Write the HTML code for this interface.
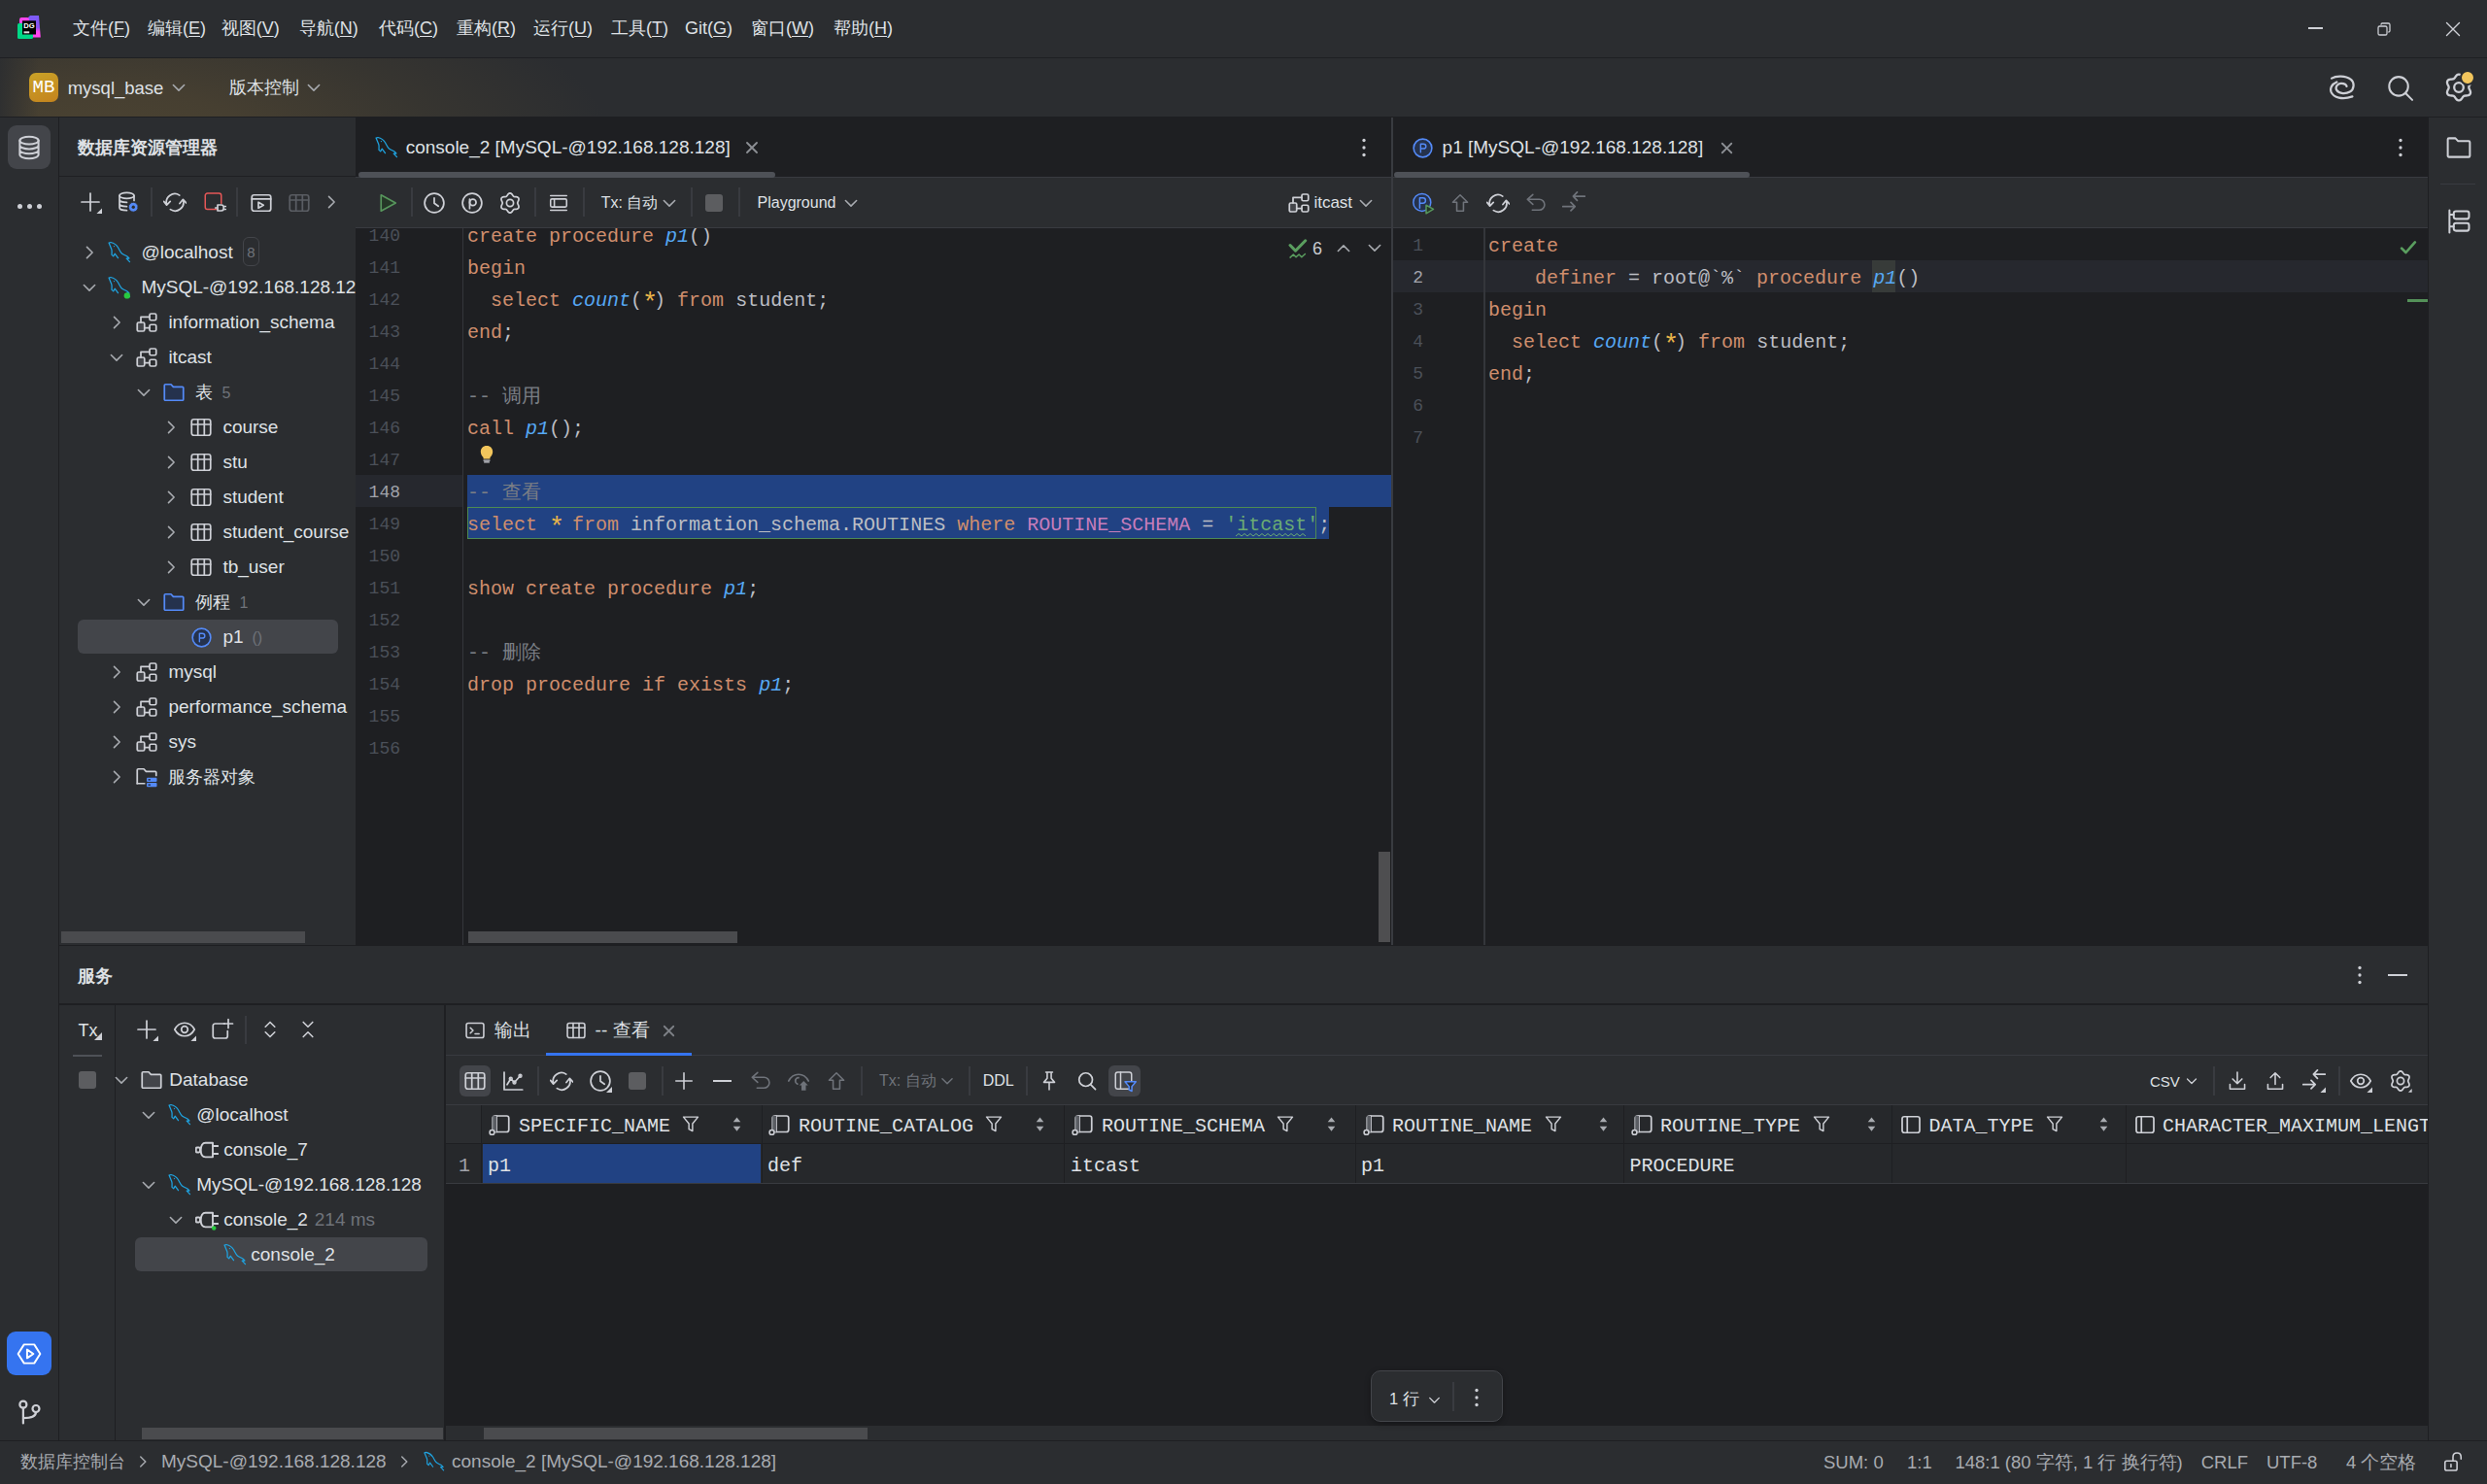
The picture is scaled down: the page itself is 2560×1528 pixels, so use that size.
<!DOCTYPE html><html><head><meta charset="utf-8"><style>
html,body{margin:0;padding:0;width:2560px;height:1528px;overflow:hidden;background:#2B2D30;position:relative;}
div,svg{box-sizing:border-box;}
</style></head><body>
<div style="position:absolute;left:0px;top:0px;width:2560px;height:59px;background:#2B2D30;"></div>
<div style="position:absolute;left:0px;top:59px;width:2560px;height:1px;background:#1E1F22;"></div>
<div style="position:absolute;left:0px;top:60px;width:2560px;height:60px;background:#2B2D30;background:radial-gradient(ellipse 520px 190px at 110px 90px, #4C4432 0%, #463F31 30%, #373530 65%, #2B2D30 100%);"></div>
<div style="position:absolute;left:0px;top:60px;width:40px;height:60px;background:linear-gradient(90deg,rgba(43,45,48,0.85) 0%,rgba(43,45,48,0) 100%);"></div>
<div style="position:absolute;left:0px;top:120px;width:2560px;height:1px;background:#1E1F22;"></div>
<div style="position:absolute;left:60px;top:121px;width:1px;height:1362px;background:#1E1F22;"></div>
<div style="position:absolute;left:2499px;top:121px;width:1px;height:1362px;background:#1E1F22;"></div>
<div style="position:absolute;left:61px;top:181px;width:305px;height:1px;background:#1E1F22;"></div>
<div style="position:absolute;left:366px;top:121px;width:1066px;height:61px;background:#1E1F22;"></div>
<div style="position:absolute;left:366px;top:182px;width:1066px;height:1px;background:#393B40;"></div>
<div style="position:absolute;left:366px;top:183px;width:1066px;height:51px;background:#2B2D30;"></div>
<div style="position:absolute;left:366px;top:234px;width:1066px;height:1px;background:#393B40;"></div>
<div style="position:absolute;left:366px;top:235px;width:1066px;height:738px;background:#1E1F22;"></div>
<div style="position:absolute;left:1432px;top:121px;width:2px;height:852px;background:#393B40;"></div>
<div style="position:absolute;left:1434px;top:121px;width:1065px;height:61px;background:#1E1F22;"></div>
<div style="position:absolute;left:1434px;top:182px;width:1065px;height:1px;background:#393B40;"></div>
<div style="position:absolute;left:1434px;top:183px;width:1065px;height:51px;background:#2B2D30;"></div>
<div style="position:absolute;left:1434px;top:234px;width:1065px;height:1px;background:#393B40;"></div>
<div style="position:absolute;left:1434px;top:235px;width:1065px;height:738px;background:#1E1F22;"></div>
<div style="position:absolute;left:61px;top:973px;width:2438px;height:1px;background:#1E1F22;"></div>
<div style="position:absolute;left:61px;top:1033px;width:2438px;height:2px;background:#1E1F22;"></div>
<div style="position:absolute;left:118px;top:1035px;width:1px;height:448px;background:#1E1F22;"></div>
<div style="position:absolute;left:457px;top:1035px;width:2px;height:448px;background:#1E1F22;"></div>
<div style="position:absolute;left:459px;top:1086px;width:2040px;height:1px;background:#393B40;"></div>
<div style="position:absolute;left:459px;top:1137px;width:2040px;height:1px;background:#393B40;"></div>
<div style="position:absolute;left:459px;top:1138px;width:2040px;height:39px;background:#26282B;"></div>
<div style="position:absolute;left:459px;top:1138px;width:36px;height:39px;background:#2B2D30;"></div>
<div style="position:absolute;left:459px;top:1177px;width:2040px;height:1px;background:#1E1F22;"></div>
<div style="position:absolute;left:459px;top:1178px;width:2040px;height:40px;background:#26282B;"></div>
<div style="position:absolute;left:459px;top:1218px;width:2040px;height:1px;background:#393B40;"></div>
<div style="position:absolute;left:459px;top:1219px;width:2040px;height:249px;background:#1E1F22;"></div>
<div style="position:absolute;left:459px;top:1468px;width:2040px;height:15px;background:#2B2D30;"></div>
<div style="position:absolute;left:0px;top:1483px;width:2560px;height:1px;background:#1E1F22;"></div>
<div style="position:absolute;left:75px;top:17.0px;height:25px;line-height:25px;font-family:'Liberation Sans',sans-serif;font-size:18px;color:#DFE1E5;white-space:pre;text-decoration-thickness:1px;text-underline-offset:2px;">文件(<u>F</u>)</div>
<div style="position:absolute;left:152px;top:17.0px;height:25px;line-height:25px;font-family:'Liberation Sans',sans-serif;font-size:18px;color:#DFE1E5;white-space:pre;text-decoration-thickness:1px;text-underline-offset:2px;">编辑(<u>E</u>)</div>
<div style="position:absolute;left:227.7px;top:17.0px;height:25px;line-height:25px;font-family:'Liberation Sans',sans-serif;font-size:18px;color:#DFE1E5;white-space:pre;text-decoration-thickness:1px;text-underline-offset:2px;">视图(<u>V</u>)</div>
<div style="position:absolute;left:307.7px;top:17.0px;height:25px;line-height:25px;font-family:'Liberation Sans',sans-serif;font-size:18px;color:#DFE1E5;white-space:pre;text-decoration-thickness:1px;text-underline-offset:2px;">导航(<u>N</u>)</div>
<div style="position:absolute;left:390px;top:17.0px;height:25px;line-height:25px;font-family:'Liberation Sans',sans-serif;font-size:18px;color:#DFE1E5;white-space:pre;text-decoration-thickness:1px;text-underline-offset:2px;">代码(<u>C</u>)</div>
<div style="position:absolute;left:469.9px;top:17.0px;height:25px;line-height:25px;font-family:'Liberation Sans',sans-serif;font-size:18px;color:#DFE1E5;white-space:pre;text-decoration-thickness:1px;text-underline-offset:2px;">重构(<u>R</u>)</div>
<div style="position:absolute;left:549.1px;top:17.0px;height:25px;line-height:25px;font-family:'Liberation Sans',sans-serif;font-size:18px;color:#DFE1E5;white-space:pre;text-decoration-thickness:1px;text-underline-offset:2px;">运行(<u>U</u>)</div>
<div style="position:absolute;left:629.1px;top:17.0px;height:25px;line-height:25px;font-family:'Liberation Sans',sans-serif;font-size:18px;color:#DFE1E5;white-space:pre;text-decoration-thickness:1px;text-underline-offset:2px;">工具(<u>T</u>)</div>
<div style="position:absolute;left:705.1px;top:17.0px;height:25px;line-height:25px;font-family:'Liberation Sans',sans-serif;font-size:18px;color:#DFE1E5;white-space:pre;text-decoration-thickness:1px;text-underline-offset:2px;">Git(<u>G</u>)</div>
<div style="position:absolute;left:773px;top:17.0px;height:25px;line-height:25px;font-family:'Liberation Sans',sans-serif;font-size:18px;color:#DFE1E5;white-space:pre;text-decoration-thickness:1px;text-underline-offset:2px;">窗口(<u>W</u>)</div>
<div style="position:absolute;left:858px;top:17.0px;height:25px;line-height:25px;font-family:'Liberation Sans',sans-serif;font-size:18px;color:#DFE1E5;white-space:pre;text-decoration-thickness:1px;text-underline-offset:2px;">帮助(<u>H</u>)</div>
<div style="position:absolute;left:30px;top:75px;width:30px;height:30px;background:linear-gradient(160deg,#C9A227,#C4831E);border-radius:7px;"></div>
<div style="position:absolute;left:30px;top:77.0px;height:26px;line-height:26px;font-family:'Liberation Mono',monospace;font-size:19px;color:#FFFFFF;white-space:pre;width:30px;text-align:center;">MB</div>
<div style="position:absolute;left:69.7px;top:77.5px;height:25px;line-height:25px;font-family:'Liberation Sans',sans-serif;font-size:18.5px;color:#DFE1E5;white-space:pre;">mysql_base</div>
<div style="position:absolute;left:236px;top:77.5px;height:25px;line-height:25px;font-family:'Liberation Sans',sans-serif;font-size:18px;color:#DFE1E5;white-space:pre;">版本控制</div>
<div style="position:absolute;left:80px;top:140.0px;height:25px;line-height:25px;font-family:'Liberation Sans',sans-serif;font-size:18px;color:#DFE1E5;white-space:pre;font-weight:bold;">数据库资源管理器</div>
<div style="position:absolute;left:80px;top:638px;width:268px;height:35px;background:#43454A;border-radius:6px;"></div>
<div style="position:absolute;left:145.4px;top:247.0px;height:26px;line-height:26px;font-family:'Liberation Sans',sans-serif;font-size:19px;color:#DFE1E5;white-space:pre;">@localhost</div>
<div style="position:absolute;left:145.4px;top:283.0px;height:26px;line-height:26px;font-family:'Liberation Sans',sans-serif;font-size:19px;color:#DFE1E5;white-space:pre;">MySQL-@192.168.128.12</div>
<div style="position:absolute;left:173.4px;top:319.0px;height:26px;line-height:26px;font-family:'Liberation Sans',sans-serif;font-size:19px;color:#DFE1E5;white-space:pre;">information_schema</div>
<div style="position:absolute;left:173.4px;top:355.0px;height:26px;line-height:26px;font-family:'Liberation Sans',sans-serif;font-size:19px;color:#DFE1E5;white-space:pre;">itcast</div>
<div style="position:absolute;left:201.4px;top:391.5px;height:25px;line-height:25px;font-family:'Liberation Sans',sans-serif;font-size:18px;color:#DFE1E5;white-space:pre;">表</div>
<div style="position:absolute;left:228.4px;top:394.0px;height:22px;line-height:22px;font-family:'Liberation Sans',sans-serif;font-size:16px;color:#6F737A;white-space:pre;">5</div>
<div style="position:absolute;left:229.4px;top:427.0px;height:26px;line-height:26px;font-family:'Liberation Sans',sans-serif;font-size:19px;color:#DFE1E5;white-space:pre;">course</div>
<div style="position:absolute;left:229.4px;top:463.0px;height:26px;line-height:26px;font-family:'Liberation Sans',sans-serif;font-size:19px;color:#DFE1E5;white-space:pre;">stu</div>
<div style="position:absolute;left:229.4px;top:499.0px;height:26px;line-height:26px;font-family:'Liberation Sans',sans-serif;font-size:19px;color:#DFE1E5;white-space:pre;">student</div>
<div style="position:absolute;left:229.4px;top:535.0px;height:26px;line-height:26px;font-family:'Liberation Sans',sans-serif;font-size:19px;color:#DFE1E5;white-space:pre;">student_course</div>
<div style="position:absolute;left:229.4px;top:571.0px;height:26px;line-height:26px;font-family:'Liberation Sans',sans-serif;font-size:19px;color:#DFE1E5;white-space:pre;">tb_user</div>
<div style="position:absolute;left:201.4px;top:607.5px;height:25px;line-height:25px;font-family:'Liberation Sans',sans-serif;font-size:18px;color:#DFE1E5;white-space:pre;">例程</div>
<div style="position:absolute;left:246.4px;top:610.0px;height:22px;line-height:22px;font-family:'Liberation Sans',sans-serif;font-size:16px;color:#6F737A;white-space:pre;">1</div>
<div style="position:absolute;left:229.4px;top:643.0px;height:26px;line-height:26px;font-family:'Liberation Sans',sans-serif;font-size:19px;color:#DFE1E5;white-space:pre;">p1</div>
<div style="position:absolute;left:259.525px;top:646.0px;height:22px;line-height:22px;font-family:'Liberation Sans',sans-serif;font-size:16px;color:#6F737A;white-space:pre;">()</div>
<div style="position:absolute;left:173.4px;top:679.0px;height:26px;line-height:26px;font-family:'Liberation Sans',sans-serif;font-size:19px;color:#DFE1E5;white-space:pre;">mysql</div>
<div style="position:absolute;left:173.4px;top:715.0px;height:26px;line-height:26px;font-family:'Liberation Sans',sans-serif;font-size:19px;color:#DFE1E5;white-space:pre;">performance_schema</div>
<div style="position:absolute;left:173.4px;top:751.0px;height:26px;line-height:26px;font-family:'Liberation Sans',sans-serif;font-size:19px;color:#DFE1E5;white-space:pre;">sys</div>
<div style="position:absolute;left:173.4px;top:787.5px;height:25px;line-height:25px;font-family:'Liberation Sans',sans-serif;font-size:18px;color:#DFE1E5;white-space:pre;">服务器对象</div>
<div style="position:absolute;left:250px;top:244px;width:17px;height:30px;background:transparent;border:1.5px solid #43454A;border-radius:6px;"></div>
<div style="position:absolute;left:251px;top:249.0px;height:21px;line-height:21px;font-family:'Liberation Sans',sans-serif;font-size:15px;color:#6F737A;white-space:pre;width:15px;text-align:center;">8</div>
<div style="position:absolute;left:417.7px;top:139.0px;height:26px;line-height:26px;font-family:'Liberation Sans',sans-serif;font-size:19px;color:#DFE1E5;white-space:pre;">console_2 [MySQL-@192.168.128.128]</div>
<div style="position:absolute;left:369px;top:177px;width:429px;height:6px;background:#4E5157;border-radius:3px;"></div>
<div style="position:absolute;left:1484.6px;top:139.0px;height:26px;line-height:26px;font-family:'Liberation Sans',sans-serif;font-size:19px;color:#DFE1E5;white-space:pre;">p1 [MySQL-@192.168.128.128]</div>
<div style="position:absolute;left:1435px;top:177px;width:366px;height:6px;background:#4E5157;border-radius:3px;"></div>
<div style="position:absolute;left:618.7px;top:197.5px;height:22px;line-height:22px;font-family:'Liberation Sans',sans-serif;font-size:16px;color:#DFE1E5;white-space:pre;">Tx: 自动</div>
<div style="position:absolute;left:779.5px;top:197.5px;height:22px;line-height:22px;font-family:'Liberation Sans',sans-serif;font-size:16px;color:#DFE1E5;white-space:pre;">Playground</div>
<div style="position:absolute;left:1352.4px;top:197.0px;height:23px;line-height:23px;font-family:'Liberation Sans',sans-serif;font-size:17px;color:#DFE1E5;white-space:pre;">itcast</div>
<div style="position:absolute;left:423px;top:193px;width:2px;height:30px;background:#393B40;"></div>
<div style="position:absolute;left:550px;top:193px;width:2px;height:30px;background:#393B40;"></div>
<div style="position:absolute;left:600px;top:193px;width:2px;height:30px;background:#393B40;"></div>
<div style="position:absolute;left:711px;top:193px;width:2px;height:30px;background:#393B40;"></div>
<div style="position:absolute;left:760px;top:193px;width:2px;height:30px;background:#393B40;"></div>
<div style="position:absolute;left:726px;top:200px;width:18px;height:18px;background:#5C5D60;border-radius:3px;"></div>
<div style="position:absolute;left:366px;top:235px;width:1066px;height:738px;overflow:hidden;">
<div style="position:absolute;left:0px;top:254px;width:110px;height:33px;background:#26282E;"></div>
<div style="position:absolute;left:115px;top:254px;width:951px;height:33px;background:#214283;"></div>
<div style="position:absolute;left:115px;top:287px;width:887px;height:33px;background:#214283;"></div>
<div style="position:absolute;left:115px;top:287px;width:874px;height:33px;background:transparent;border:1px solid #4E8A53;"></div>
<div style="position:absolute;left:0;top:-8px;width:46px;height:33px;line-height:33px;font-family:'Liberation Mono',monospace;font-size:18px;color:#4B5059;text-align:right;">140</div>
<div style="position:absolute;left:115px;top:-8px;height:33px;line-height:33px;font-family:'Liberation Mono',monospace;font-size:20px;color:#BCBEC4;white-space:pre;"><span style="color:#CF8E6D">create</span> <span style="color:#CF8E6D">procedure</span> <span style="color:#56A8F5;font-style:italic">p1</span><span style="color:#BCBEC4">()</span></div>
<div style="position:absolute;left:0;top:25px;width:46px;height:33px;line-height:33px;font-family:'Liberation Mono',monospace;font-size:18px;color:#4B5059;text-align:right;">141</div>
<div style="position:absolute;left:115px;top:25px;height:33px;line-height:33px;font-family:'Liberation Mono',monospace;font-size:20px;color:#BCBEC4;white-space:pre;"><span style="color:#CF8E6D">begin</span></div>
<div style="position:absolute;left:0;top:58px;width:46px;height:33px;line-height:33px;font-family:'Liberation Mono',monospace;font-size:18px;color:#4B5059;text-align:right;">142</div>
<div style="position:absolute;left:115px;top:58px;height:33px;line-height:33px;font-family:'Liberation Mono',monospace;font-size:20px;color:#BCBEC4;white-space:pre;">  <span style="color:#CF8E6D">select</span> <span style="color:#56A8F5;font-style:italic">count</span><span style="color:#BCBEC4">(</span><span style="color:#E8B44A;display:inline-block;width:12px;text-align:center;font-size:27px;line-height:20px;vertical-align:-5px;">*</span><span style="color:#BCBEC4">)</span> <span style="color:#CF8E6D">from</span> <span style="color:#BCBEC4">student;</span></div>
<div style="position:absolute;left:0;top:91px;width:46px;height:33px;line-height:33px;font-family:'Liberation Mono',monospace;font-size:18px;color:#4B5059;text-align:right;">143</div>
<div style="position:absolute;left:115px;top:91px;height:33px;line-height:33px;font-family:'Liberation Mono',monospace;font-size:20px;color:#BCBEC4;white-space:pre;"><span style="color:#CF8E6D">end</span><span style="color:#BCBEC4">;</span></div>
<div style="position:absolute;left:0;top:124px;width:46px;height:33px;line-height:33px;font-family:'Liberation Mono',monospace;font-size:18px;color:#4B5059;text-align:right;">144</div>
<div style="position:absolute;left:115px;top:124px;height:33px;line-height:33px;font-family:'Liberation Mono',monospace;font-size:20px;color:#BCBEC4;white-space:pre;"></div>
<div style="position:absolute;left:0;top:157px;width:46px;height:33px;line-height:33px;font-family:'Liberation Mono',monospace;font-size:18px;color:#4B5059;text-align:right;">145</div>
<div style="position:absolute;left:115px;top:157px;height:33px;line-height:33px;font-family:'Liberation Mono',monospace;font-size:20px;color:#BCBEC4;white-space:pre;"><span style="color:#7A7E85">-- 调用</span></div>
<div style="position:absolute;left:0;top:190px;width:46px;height:33px;line-height:33px;font-family:'Liberation Mono',monospace;font-size:18px;color:#4B5059;text-align:right;">146</div>
<div style="position:absolute;left:115px;top:190px;height:33px;line-height:33px;font-family:'Liberation Mono',monospace;font-size:20px;color:#BCBEC4;white-space:pre;"><span style="color:#CF8E6D">call</span> <span style="color:#56A8F5;font-style:italic">p1</span><span style="color:#BCBEC4">();</span></div>
<div style="position:absolute;left:0;top:223px;width:46px;height:33px;line-height:33px;font-family:'Liberation Mono',monospace;font-size:18px;color:#4B5059;text-align:right;">147</div>
<div style="position:absolute;left:115px;top:223px;height:33px;line-height:33px;font-family:'Liberation Mono',monospace;font-size:20px;color:#BCBEC4;white-space:pre;"></div>
<div style="position:absolute;left:0;top:256px;width:46px;height:33px;line-height:33px;font-family:'Liberation Mono',monospace;font-size:18px;color:#A1A3AB;text-align:right;">148</div>
<div style="position:absolute;left:115px;top:256px;height:33px;line-height:33px;font-family:'Liberation Mono',monospace;font-size:20px;color:#BCBEC4;white-space:pre;"><span style="color:#7A7E85">-- 查看</span></div>
<div style="position:absolute;left:0;top:289px;width:46px;height:33px;line-height:33px;font-family:'Liberation Mono',monospace;font-size:18px;color:#4B5059;text-align:right;">149</div>
<div style="position:absolute;left:115px;top:289px;height:33px;line-height:33px;font-family:'Liberation Mono',monospace;font-size:20px;color:#BCBEC4;white-space:pre;"><span style="color:#CF8E6D">select</span> <span style="color:#E8B44A;display:inline-block;width:12px;text-align:center;font-size:27px;line-height:20px;vertical-align:-5px;">*</span> <span style="color:#CF8E6D">from</span> <span style="color:#BCBEC4">information_schema.ROUTINES</span> <span style="color:#CF8E6D">where</span> <span style="color:#C77DBB">ROUTINE_SCHEMA</span> <span style="color:#BCBEC4">=</span> <span style="color:#6AAB73">'itcast'</span><span style="color:#BCBEC4">;</span></div>
<div style="position:absolute;left:0;top:322px;width:46px;height:33px;line-height:33px;font-family:'Liberation Mono',monospace;font-size:18px;color:#4B5059;text-align:right;">150</div>
<div style="position:absolute;left:115px;top:322px;height:33px;line-height:33px;font-family:'Liberation Mono',monospace;font-size:20px;color:#BCBEC4;white-space:pre;"></div>
<div style="position:absolute;left:0;top:355px;width:46px;height:33px;line-height:33px;font-family:'Liberation Mono',monospace;font-size:18px;color:#4B5059;text-align:right;">151</div>
<div style="position:absolute;left:115px;top:355px;height:33px;line-height:33px;font-family:'Liberation Mono',monospace;font-size:20px;color:#BCBEC4;white-space:pre;"><span style="color:#CF8E6D">show</span> <span style="color:#CF8E6D">create</span> <span style="color:#CF8E6D">procedure</span> <span style="color:#56A8F5;font-style:italic">p1</span><span style="color:#BCBEC4">;</span></div>
<div style="position:absolute;left:0;top:388px;width:46px;height:33px;line-height:33px;font-family:'Liberation Mono',monospace;font-size:18px;color:#4B5059;text-align:right;">152</div>
<div style="position:absolute;left:115px;top:388px;height:33px;line-height:33px;font-family:'Liberation Mono',monospace;font-size:20px;color:#BCBEC4;white-space:pre;"></div>
<div style="position:absolute;left:0;top:421px;width:46px;height:33px;line-height:33px;font-family:'Liberation Mono',monospace;font-size:18px;color:#4B5059;text-align:right;">153</div>
<div style="position:absolute;left:115px;top:421px;height:33px;line-height:33px;font-family:'Liberation Mono',monospace;font-size:20px;color:#BCBEC4;white-space:pre;"><span style="color:#7A7E85">-- 删除</span></div>
<div style="position:absolute;left:0;top:454px;width:46px;height:33px;line-height:33px;font-family:'Liberation Mono',monospace;font-size:18px;color:#4B5059;text-align:right;">154</div>
<div style="position:absolute;left:115px;top:454px;height:33px;line-height:33px;font-family:'Liberation Mono',monospace;font-size:20px;color:#BCBEC4;white-space:pre;"><span style="color:#CF8E6D">drop</span> <span style="color:#CF8E6D">procedure</span> <span style="color:#CF8E6D">if</span> <span style="color:#CF8E6D">exists</span> <span style="color:#56A8F5;font-style:italic">p1</span><span style="color:#BCBEC4">;</span></div>
<div style="position:absolute;left:0;top:487px;width:46px;height:33px;line-height:33px;font-family:'Liberation Mono',monospace;font-size:18px;color:#4B5059;text-align:right;">155</div>
<div style="position:absolute;left:115px;top:487px;height:33px;line-height:33px;font-family:'Liberation Mono',monospace;font-size:20px;color:#BCBEC4;white-space:pre;"></div>
<div style="position:absolute;left:0;top:520px;width:46px;height:33px;line-height:33px;font-family:'Liberation Mono',monospace;font-size:18px;color:#4B5059;text-align:right;">156</div>
<div style="position:absolute;left:115px;top:520px;height:33px;line-height:33px;font-family:'Liberation Mono',monospace;font-size:20px;color:#BCBEC4;white-space:pre;"></div>
</div>
<div style="position:absolute;left:476px;top:235px;width:1px;height:738px;background:#34363B;"></div>
<div style="position:absolute;left:1351px;top:243.5px;height:25px;line-height:25px;font-family:'Liberation Sans',sans-serif;font-size:18px;color:#C9CBD0;white-space:pre;">6</div>
<div style="position:absolute;left:1434px;top:235px;width:1065px;height:738px;overflow:hidden;">
<div style="position:absolute;left:0px;top:33px;width:1065px;height:33px;background:#26282E;"></div>
<div style="position:absolute;left:493px;top:33px;width:24px;height:33px;background:#373B39;"></div>
<div style="position:absolute;left:0;top:2px;width:31px;height:33px;line-height:33px;font-family:'Liberation Mono',monospace;font-size:18px;color:#4B5059;text-align:right;">1</div>
<div style="position:absolute;left:98px;top:2px;height:33px;line-height:33px;font-family:'Liberation Mono',monospace;font-size:20px;color:#BCBEC4;white-space:pre;"><span style="color:#CF8E6D">create</span></div>
<div style="position:absolute;left:0;top:35px;width:31px;height:33px;line-height:33px;font-family:'Liberation Mono',monospace;font-size:18px;color:#A1A3AB;text-align:right;">2</div>
<div style="position:absolute;left:98px;top:35px;height:33px;line-height:33px;font-family:'Liberation Mono',monospace;font-size:20px;color:#BCBEC4;white-space:pre;">    <span style="color:#CF8E6D">definer</span> <span style="color:#BCBEC4">=</span> <span style="color:#BCBEC4">root@`%`</span> <span style="color:#CF8E6D">procedure</span> <span style="color:#56A8F5;font-style:italic">p1</span><span style="color:#BCBEC4">()</span></div>
<div style="position:absolute;left:0;top:68px;width:31px;height:33px;line-height:33px;font-family:'Liberation Mono',monospace;font-size:18px;color:#4B5059;text-align:right;">3</div>
<div style="position:absolute;left:98px;top:68px;height:33px;line-height:33px;font-family:'Liberation Mono',monospace;font-size:20px;color:#BCBEC4;white-space:pre;"><span style="color:#CF8E6D">begin</span></div>
<div style="position:absolute;left:0;top:101px;width:31px;height:33px;line-height:33px;font-family:'Liberation Mono',monospace;font-size:18px;color:#4B5059;text-align:right;">4</div>
<div style="position:absolute;left:98px;top:101px;height:33px;line-height:33px;font-family:'Liberation Mono',monospace;font-size:20px;color:#BCBEC4;white-space:pre;">  <span style="color:#CF8E6D">select</span> <span style="color:#56A8F5;font-style:italic">count</span><span style="color:#BCBEC4">(</span><span style="color:#E8B44A;display:inline-block;width:12px;text-align:center;font-size:27px;line-height:20px;vertical-align:-5px;">*</span><span style="color:#BCBEC4">)</span> <span style="color:#CF8E6D">from</span> <span style="color:#BCBEC4">student;</span></div>
<div style="position:absolute;left:0;top:134px;width:31px;height:33px;line-height:33px;font-family:'Liberation Mono',monospace;font-size:18px;color:#4B5059;text-align:right;">5</div>
<div style="position:absolute;left:98px;top:134px;height:33px;line-height:33px;font-family:'Liberation Mono',monospace;font-size:20px;color:#BCBEC4;white-space:pre;"><span style="color:#CF8E6D">end</span><span style="color:#BCBEC4">;</span></div>
<div style="position:absolute;left:0;top:167px;width:31px;height:33px;line-height:33px;font-family:'Liberation Mono',monospace;font-size:18px;color:#4B5059;text-align:right;">6</div>
<div style="position:absolute;left:98px;top:167px;height:33px;line-height:33px;font-family:'Liberation Mono',monospace;font-size:20px;color:#BCBEC4;white-space:pre;"></div>
<div style="position:absolute;left:0;top:200px;width:31px;height:33px;line-height:33px;font-family:'Liberation Mono',monospace;font-size:18px;color:#4B5059;text-align:right;">7</div>
<div style="position:absolute;left:98px;top:200px;height:33px;line-height:33px;font-family:'Liberation Mono',monospace;font-size:20px;color:#BCBEC4;white-space:pre;"></div>
</div>
<div style="position:absolute;left:1527px;top:235px;width:2px;height:738px;background:#34363B;"></div>
<div style="position:absolute;left:2478px;top:308px;width:21px;height:3px;background:#549159;"></div>
<div style="position:absolute;left:63px;top:959px;width:251px;height:12px;background:#4A4B4E;"></div>
<div style="position:absolute;left:482px;top:959px;width:277px;height:12px;background:#4A4B4E;"></div>
<div style="position:absolute;left:1419px;top:877px;width:12px;height:93px;background:#4E4E50;"></div>
<div style="position:absolute;left:80px;top:992.5px;height:25px;line-height:25px;font-family:'Liberation Sans',sans-serif;font-size:18px;color:#DFE1E5;white-space:pre;font-weight:bold;">服务</div>
<div style="position:absolute;left:80.5px;top:1048.5px;height:25px;line-height:25px;font-family:'Liberation Sans',sans-serif;font-size:18px;color:#DFE1E5;white-space:pre;">Tx</div>
<div style="position:absolute;left:75px;top:1086px;width:30px;height:2px;background:#4E5157;"></div>
<div style="position:absolute;left:81px;top:1103px;width:18px;height:18px;background:#5C5D60;border-radius:3px;"></div>
<div style="position:absolute;left:139px;top:1274px;width:301px;height:35px;background:#43454A;border-radius:6px;"></div>
<div style="position:absolute;left:174.3px;top:1099.0px;height:26px;line-height:26px;font-family:'Liberation Sans',sans-serif;font-size:19px;color:#DFE1E5;white-space:pre;">Database</div>
<div style="position:absolute;left:202.3px;top:1135.0px;height:26px;line-height:26px;font-family:'Liberation Sans',sans-serif;font-size:19px;color:#DFE1E5;white-space:pre;">@localhost</div>
<div style="position:absolute;left:230.3px;top:1171.0px;height:26px;line-height:26px;font-family:'Liberation Sans',sans-serif;font-size:19px;color:#DFE1E5;white-space:pre;">console_7</div>
<div style="position:absolute;left:202.3px;top:1207.0px;height:26px;line-height:26px;font-family:'Liberation Sans',sans-serif;font-size:19px;color:#DFE1E5;white-space:pre;">MySQL-@192.168.128.128</div>
<div style="position:absolute;left:230.3px;top:1243.0px;height:26px;line-height:26px;font-family:'Liberation Sans',sans-serif;font-size:19px;color:#DFE1E5;white-space:pre;">console_2</div>
<div style="position:absolute;left:323.8px;top:1243.0px;height:26px;line-height:26px;font-family:'Liberation Sans',sans-serif;font-size:19px;color:#6F737A;white-space:pre;">214 ms</div>
<div style="position:absolute;left:258.3px;top:1279.0px;height:26px;line-height:26px;font-family:'Liberation Sans',sans-serif;font-size:19px;color:#DFE1E5;white-space:pre;">console_2</div>
<div style="position:absolute;left:146px;top:1470px;width:310px;height:12px;background:#4A4B4E;"></div>
<div style="position:absolute;left:509px;top:1048.0px;height:26px;line-height:26px;font-family:'Liberation Sans',sans-serif;font-size:19px;color:#DFE1E5;white-space:pre;">输出</div>
<div style="position:absolute;left:612.6px;top:1048.0px;height:26px;line-height:26px;font-family:'Liberation Sans',sans-serif;font-size:19px;color:#DFE1E5;white-space:pre;">-- 查看</div>
<div style="position:absolute;left:562px;top:1084px;width:150px;height:3px;background:#3574F0;"></div>
<div style="position:absolute;left:473px;top:1097px;width:32px;height:32px;background:#43454A;border-radius:6px;"></div>
<div style="position:absolute;left:1141px;top:1097px;width:33px;height:32px;background:#43454A;border-radius:6px;"></div>
<div style="position:absolute;left:553px;top:1098px;width:2px;height:30px;background:#393B40;"></div>
<div style="position:absolute;left:681px;top:1098px;width:2px;height:30px;background:#393B40;"></div>
<div style="position:absolute;left:886px;top:1098px;width:2px;height:30px;background:#393B40;"></div>
<div style="position:absolute;left:997px;top:1098px;width:2px;height:30px;background:#393B40;"></div>
<div style="position:absolute;left:1056px;top:1098px;width:2px;height:30px;background:#393B40;"></div>
<div style="position:absolute;left:2278px;top:1098px;width:2px;height:30px;background:#393B40;"></div>
<div style="position:absolute;left:2407px;top:1098px;width:2px;height:30px;background:#393B40;"></div>
<div style="position:absolute;left:647px;top:1104px;width:18px;height:18px;background:#5C5D60;border-radius:3px;"></div>
<div style="position:absolute;left:905px;top:1102.0px;height:22px;line-height:22px;font-family:'Liberation Sans',sans-serif;font-size:16px;color:#6F737A;white-space:pre;">Tx: 自动</div>
<div style="position:absolute;left:1011.7px;top:1102.0px;height:22px;line-height:22px;font-family:'Liberation Sans',sans-serif;font-size:16px;color:#DFE1E5;white-space:pre;">DDL</div>
<div style="position:absolute;left:2213px;top:1102.5px;height:21px;line-height:21px;font-family:'Liberation Sans',sans-serif;font-size:15px;color:#DFE1E5;white-space:pre;">CSV</div>
<div style="position:absolute;left:459px;top:1138px;width:2040px;height:81px;overflow:hidden;">
<div style="position:absolute;left:36px;top:0;width:1px;height:80px;background:#1E1F22;"></div>
<div style="position:absolute;left:75px;top:2px;height:39px;line-height:39px;font-family:'Liberation Mono',monospace;font-size:20px;color:#DFE1E5;white-space:pre;">SPECIFIC_NAME</div>
<div style="position:absolute;left:324.6px;top:0;width:1px;height:80px;background:#1E1F22;"></div>
<div style="position:absolute;left:363px;top:2px;height:39px;line-height:39px;font-family:'Liberation Mono',monospace;font-size:20px;color:#DFE1E5;white-space:pre;">ROUTINE_CATALOG</div>
<div style="position:absolute;left:636.3px;top:0;width:1px;height:80px;background:#1E1F22;"></div>
<div style="position:absolute;left:675px;top:2px;height:39px;line-height:39px;font-family:'Liberation Mono',monospace;font-size:20px;color:#DFE1E5;white-space:pre;">ROUTINE_SCHEMA</div>
<div style="position:absolute;left:936.2px;top:0;width:1px;height:80px;background:#1E1F22;"></div>
<div style="position:absolute;left:974px;top:2px;height:39px;line-height:39px;font-family:'Liberation Mono',monospace;font-size:20px;color:#DFE1E5;white-space:pre;">ROUTINE_NAME</div>
<div style="position:absolute;left:1212.3px;top:0;width:1px;height:80px;background:#1E1F22;"></div>
<div style="position:absolute;left:1250px;top:2px;height:39px;line-height:39px;font-family:'Liberation Mono',monospace;font-size:20px;color:#DFE1E5;white-space:pre;">ROUTINE_TYPE</div>
<div style="position:absolute;left:1488px;top:0;width:1px;height:80px;background:#1E1F22;"></div>
<div style="position:absolute;left:1526.4px;top:2px;height:39px;line-height:39px;font-family:'Liberation Mono',monospace;font-size:20px;color:#DFE1E5;white-space:pre;">DATA_TYPE</div>
<div style="position:absolute;left:1728.5px;top:0;width:1px;height:80px;background:#1E1F22;"></div>
<div style="position:absolute;left:1767px;top:2px;height:39px;line-height:39px;font-family:'Liberation Mono',monospace;font-size:20px;color:#DFE1E5;white-space:pre;">CHARACTER_MAXIMUM_LENGTH</div>
</div>
<div style="position:absolute;left:497px;top:1178px;width:286px;height:40px;background:#214283;"></div>
<div style="position:absolute;left:472px;top:1186.5px;height:28px;line-height:28px;font-family:'Liberation Mono',monospace;font-size:20px;color:#A1A3AB;white-space:pre;">1</div>
<div style="position:absolute;left:502px;top:1186.5px;height:28px;line-height:28px;font-family:'Liberation Mono',monospace;font-size:20px;color:#DFE1E5;white-space:pre;">p1</div>
<div style="position:absolute;left:790px;top:1186.5px;height:28px;line-height:28px;font-family:'Liberation Mono',monospace;font-size:20px;color:#DFE1E5;white-space:pre;">def</div>
<div style="position:absolute;left:1102px;top:1186.5px;height:28px;line-height:28px;font-family:'Liberation Mono',monospace;font-size:20px;color:#DFE1E5;white-space:pre;">itcast</div>
<div style="position:absolute;left:1401px;top:1186.5px;height:28px;line-height:28px;font-family:'Liberation Mono',monospace;font-size:20px;color:#DFE1E5;white-space:pre;">p1</div>
<div style="position:absolute;left:1677.4px;top:1186.5px;height:28px;line-height:28px;font-family:'Liberation Mono',monospace;font-size:20px;color:#DFE1E5;white-space:pre;">PROCEDURE</div>
<div style="position:absolute;left:498px;top:1470px;width:395px;height:12px;background:#4A4B4E;"></div>
<div style="position:absolute;left:1411px;top:1411px;width:136px;height:53px;background:#2B2D30;border:1px solid #43454A;border-radius:10px;box-shadow:0 2px 6px rgba(0,0,0,.3);"></div>
<div style="position:absolute;left:1430px;top:1428.5px;height:23px;line-height:23px;font-family:'Liberation Sans',sans-serif;font-size:16.5px;color:#DFE1E5;white-space:pre;">1 行</div>
<div style="position:absolute;left:1495px;top:1423px;width:2px;height:30px;background:#393B40;"></div>
<div style="position:absolute;left:20.7px;top:1492.5px;height:25px;line-height:25px;font-family:'Liberation Sans',sans-serif;font-size:18px;color:#A8ABB0;white-space:pre;">数据库控制台</div>
<div style="position:absolute;left:166px;top:1492.0px;height:26px;line-height:26px;font-family:'Liberation Sans',sans-serif;font-size:19px;color:#A8ABB0;white-space:pre;">MySQL-@192.168.128.128</div>
<div style="position:absolute;left:465px;top:1492.0px;height:26px;line-height:26px;font-family:'Liberation Sans',sans-serif;font-size:19px;color:#A8ABB0;white-space:pre;">console_2 [MySQL-@192.168.128.128]</div>
<div style="position:absolute;left:1877px;top:1492.5px;height:25px;line-height:25px;font-family:'Liberation Sans',sans-serif;font-size:18.5px;color:#A8ABB0;white-space:pre;">SUM: 0</div>
<div style="position:absolute;left:1963px;top:1492.5px;height:25px;line-height:25px;font-family:'Liberation Sans',sans-serif;font-size:18.5px;color:#A8ABB0;white-space:pre;">1:1</div>
<div style="position:absolute;left:2012.4px;top:1492.5px;height:25px;line-height:25px;font-family:'Liberation Sans',sans-serif;font-size:18.5px;color:#A8ABB0;white-space:pre;">148:1 (80 字符, 1 行 换行符)</div>
<div style="position:absolute;left:2265.7px;top:1492.5px;height:25px;line-height:25px;font-family:'Liberation Sans',sans-serif;font-size:18.5px;color:#A8ABB0;white-space:pre;">CRLF</div>
<div style="position:absolute;left:2333px;top:1492.5px;height:25px;line-height:25px;font-family:'Liberation Sans',sans-serif;font-size:18.5px;color:#A8ABB0;white-space:pre;">UTF-8</div>
<div style="position:absolute;left:2415px;top:1492.5px;height:25px;line-height:25px;font-family:'Liberation Sans',sans-serif;font-size:18.5px;color:#A8ABB0;white-space:pre;">4 个空格</div>
<svg style="position:absolute;left:17px;top:15px" width="26" height="26" viewBox="0 0 26 26"><defs><linearGradient id="pp" x1="0" y1="0" x2="0" y2="1"><stop offset="0" stop-color="#7B5CFA"/><stop offset="0.55" stop-color="#8A52F0"/><stop offset="0.75" stop-color="#FF45ED"/><stop offset="1" stop-color="#FF45ED"/></linearGradient></defs><path d="M11 4 L14 1 H23 L24.8 23.5 H16 L13 20 Z" fill="url(#pp)"/><rect x="3" y="3" width="10" height="10" rx="2.2" fill="#FF45ED"/><rect x="1" y="9" width="16" height="16" rx="1.6" fill="#00D886"/><rect x="6" y="6.3" width="14" height="14.2" fill="#000"/><text x="7.2" y="14.2" font-family="Liberation Sans" font-weight="bold" font-size="7.6" fill="#fff">DG</text><rect x="7.5" y="17.3" width="5.7" height="2" fill="#ddd"/></svg>
<div style="position:absolute;left:2376px;top:28px;width:15px;height:2px;background:#CED0D6;"></div>
<svg style="position:absolute;left:2445.5px;top:21.5px;" width="16" height="16" viewBox="0 0 16 16" fill="none" stroke-linecap="round" stroke-linejoin="round"><rect x="2" y="5" width="9" height="9" rx="1.6" stroke="#CED0D6" stroke-width="1.26"/><path d="M5 3.2 C5 2.5 5.5 2 6.2 2 H12.4 C13.2 2 14 2.8 14 3.6 V9.8 C14 10.5 13.5 11 12.8 11" stroke="#CED0D6" stroke-width="1.26"/></svg>
<svg style="position:absolute;left:2516.5px;top:21.5px;" width="16" height="16" viewBox="0 0 16 16" fill="none" stroke-linecap="round" stroke-linejoin="round"><path d="M1.5 1.5 L14.5 14.5 M14.5 1.5 L1.5 14.5" stroke="#CED0D6" stroke-width="1.38"/></svg>
<svg style="position:absolute;left:174.0px;top:80.0px;" width="20" height="20" viewBox="0 0 16 16" fill="none" stroke-linecap="round" stroke-linejoin="round"><path d="M3.5 6 L8 10.5 L12.5 6" stroke="#A8ABB0" stroke-width="1.26"/></svg>
<svg style="position:absolute;left:313.0px;top:80.0px;" width="20" height="20" viewBox="0 0 16 16" fill="none" stroke-linecap="round" stroke-linejoin="round"><path d="M3.5 6 L8 10.5 L12.5 6" stroke="#A8ABB0" stroke-width="1.26"/></svg>
<svg style="position:absolute;left:2397.5px;top:77.0px;" width="26" height="26" viewBox="0 0 16 16" fill="none" stroke-linecap="round" stroke-linejoin="round"><path d="M1.3 2.2 C4 0.5 10 0.3 13.5 3 C16 5 15.5 9.5 12.8 10.8 C10.5 12.2 6 12.3 4.5 9.8 C3.3 7.8 5 5.3 7.5 5.5 C9 5.6 10.5 6.2 10.8 7.3 M4.5 4.6 C1.5 5.8 0 8.5 1 11 C2.5 14.5 8 16 14.4 13.8" stroke="#CED0D6" stroke-width="1.38"/></svg>
<svg style="position:absolute;left:2458.0px;top:77.5px;" width="26" height="26" viewBox="0 0 16 16" fill="none" stroke-linecap="round" stroke-linejoin="round"><circle cx="6.8" cy="6.7" r="6" stroke="#CED0D6" stroke-width="1.26"/><path d="M11.2 11.1 L15.4 15.3" stroke="#CED0D6" stroke-width="1.26"/></svg>
<svg style="position:absolute;left:2514.5px;top:74.0px;" width="32" height="32" viewBox="0 0 16 16" fill="none" stroke-linecap="round" stroke-linejoin="round"><path d="M8.00 1.25 L8.58 1.38 L9.10 1.75 L9.54 2.25 L9.90 2.78 L10.22 3.24 L10.57 3.54 L11.02 3.69 L11.57 3.75 L12.21 3.79 L12.86 3.92 L13.44 4.19 L13.85 4.62 L14.02 5.19 L13.97 5.83 L13.75 6.46 L13.47 7.04 L13.24 7.54 L13.15 8.00 L13.24 8.46 L13.47 8.96 L13.75 9.54 L13.97 10.17 L14.02 10.81 L13.85 11.37 L13.44 11.81 L12.86 12.08 L12.21 12.21 L11.57 12.25 L11.02 12.31 L10.58 12.46 L10.22 12.76 L9.90 13.22 L9.54 13.75 L9.10 14.25 L8.58 14.62 L8.00 14.75 L7.42 14.62 L6.90 14.25 L6.46 13.75 L6.10 13.22 L5.78 12.76 L5.42 12.46 L4.98 12.31 L4.43 12.25 L3.79 12.21 L3.14 12.08 L2.56 11.81 L2.15 11.38 L1.98 10.81 L2.03 10.17 L2.25 9.54 L2.53 8.96 L2.76 8.46 L2.85 8.00 L2.76 7.54 L2.53 7.04 L2.25 6.46 L2.03 5.83 L1.98 5.19 L2.15 4.63 L2.56 4.19 L3.14 3.92 L3.79 3.79 L4.43 3.75 L4.98 3.69 L5.43 3.54 L5.78 3.24 L6.10 2.78 L6.46 2.25 L6.90 1.75 L7.42 1.38 L8.00 1.25 Z" stroke="#CED0D6" stroke-width="1.15"/><circle cx="8" cy="8" r="2.4" stroke="#CED0D6" stroke-width="1.15"/></svg>
<div style="position:absolute;left:2532.3px;top:72.3px;width:16px;height:16px;border-radius:8px;background:#F2C55C;border:2.5px solid #2B2D30;"></div>
<div style="position:absolute;left:8px;top:129px;width:44px;height:45px;background:#43454A;border-radius:9px;"></div>
<svg style="position:absolute;left:16.0px;top:137.5px;" width="28" height="28" viewBox="0 0 16 16" fill="none" stroke-linecap="round" stroke-linejoin="round"><ellipse cx="8" cy="3.8" rx="5.5" ry="2.2" stroke="#CED0D6" stroke-width="1.15"/><path d="M2.5 3.8 V12.2 C2.5 13.4 5 14.4 8 14.4 C11 14.4 13.5 13.4 13.5 12.2 V3.8 M2.5 6.6 C2.5 7.8 5 8.8 8 8.8 C11 8.8 13.5 7.8 13.5 6.6 M2.5 9.4 C2.5 10.6 5 11.6 8 11.6 C11 11.6 13.5 10.6 13.5 9.4" stroke="#CED0D6" stroke-width="1.15"/></svg>
<div style="position:absolute;left:17.5px;top:209.5px;width:5px;height:5px;border-radius:3px;background:#CED0D6;"></div>
<div style="position:absolute;left:27.5px;top:209.5px;width:5px;height:5px;border-radius:3px;background:#CED0D6;"></div>
<div style="position:absolute;left:37.5px;top:209.5px;width:5px;height:5px;border-radius:3px;background:#CED0D6;"></div>
<div style="position:absolute;left:7px;top:1371px;width:46px;height:45px;background:#3574F0;border-radius:9px;"></div>
<svg style="position:absolute;left:16.0px;top:1379.5px;" width="28" height="28" viewBox="0 0 16 16" fill="none" stroke-linecap="round" stroke-linejoin="round"><path d="M5 2.5 H11 L14.5 8 L11 13.5 H5 L1.5 8 Z" stroke="#fff" stroke-width="1.1"/><path d="M6.8 5.5 V10.5 L10.5 8 Z" stroke="#fff" stroke-width="1.1"/></svg>
<svg style="position:absolute;left:15.5px;top:1440.0px;" width="28" height="28" viewBox="0 0 16 16" fill="none" stroke-linecap="round" stroke-linejoin="round"><circle cx="4.5" cy="3.5" r="2" stroke="#CED0D6" stroke-width="1.26"/><circle cx="12" cy="6" r="2" stroke="#CED0D6" stroke-width="1.26"/><path d="M4.5 5.5 V14.5 M12 8 C12 10.5 9 11.5 4.5 11.5" stroke="#CED0D6" stroke-width="1.26"/></svg>
<svg style="position:absolute;left:81.0px;top:196.0px;" width="24" height="24" viewBox="0 0 16 16" fill="none" stroke-linecap="round" stroke-linejoin="round"><path d="M8 2 V14 M2 8 H14" stroke="#CED0D6" stroke-width="1.15"/><path d="M16 12.3 V16 H12.3 Z" fill="#CED0D6"/></svg>
<svg style="position:absolute;left:120.0px;top:196.0px;" width="24" height="24" viewBox="0 0 16 16" fill="none" stroke-linecap="round" stroke-linejoin="round"><ellipse cx="7" cy="3.6" rx="5" ry="2" stroke="#CED0D6" stroke-width="1.15"/><path d="M2 3.6 V11.8 C2 12.9 4.2 13.8 7 13.8 M12 3.6 V7 M2 6.3 C2 7.4 4.2 8.3 7 8.3 M2 9.1 C2 10.2 4.2 11.1 7 11.1" stroke="#CED0D6" stroke-width="1.15"/><circle cx="11.5" cy="11.5" r="3.3" fill="#548AF7" stroke="#2B2D30" stroke-width="0.6"/><circle cx="11.5" cy="11.5" r="1.1" fill="#2B2D30"/></svg>
<div style="position:absolute;left:155px;top:193px;width:2px;height:30px;background:#393B40;"></div>
<svg style="position:absolute;left:168.0px;top:196.0px;" width="24" height="24" viewBox="0 0 16 16" fill="none" stroke-linecap="round" stroke-linejoin="round"><path d="M11.2 3.4 A5.8 5.8 0 0 0 2.4 9.8 M0.4 7.6 L2.4 10.1 L4.8 7.6 M4.9 13.1 A5.8 5.8 0 0 0 13.6 6.4 M11.3 9 L13.6 6.2 L15.8 8.7" stroke="#CED0D6" stroke-width="1.15"/></svg>
<svg style="position:absolute;left:209.0px;top:196.0px;" width="24" height="24" viewBox="0 0 16 16" fill="none" stroke-linecap="round" stroke-linejoin="round"><path d="M9.5 13 H3 C2.2 13 1.5 12.3 1.5 11.5 V3.5 C1.5 2.7 2.2 2 3 2 H11 C11.8 2 12.5 2.7 12.5 3.5 V9" stroke="#E55757" stroke-width="1"/><path d="M10 10 H12.6 C13.6 10 14.2 11 14.2 12 C14.2 13 13.6 14 12.6 14 H10 Z M14.2 11 H15.5 M14.2 13 H15.5 M10 12 H8.5" stroke="#CED0D6" stroke-width="1.15"/></svg>
<div style="position:absolute;left:243px;top:193px;width:2px;height:30px;background:#393B40;"></div>
<svg style="position:absolute;left:257.0px;top:196.5px;" width="24" height="24" viewBox="0 0 16 16" fill="none" stroke-linecap="round" stroke-linejoin="round"><rect x="1.5" y="2.5" width="13" height="11" rx="1.5" stroke="#CED0D6" stroke-width="1.15"/><path d="M1.5 5.3 H14.5 M6 7.5 V11.5 L9.5 9.5 Z" stroke="#CED0D6" stroke-width="1.15"/></svg>
<svg style="position:absolute;left:296.0px;top:196.5px;" width="24" height="24" viewBox="0 0 16 16" fill="none" stroke-linecap="round" stroke-linejoin="round"><rect x="1.5" y="2.5" width="13" height="11" rx="1.5" stroke="#5A5D63" stroke-width="1.15"/><path d="M1.5 6 H14.5 M5.8 2.5 V13.5 M10.2 2.5 V13.5" stroke="#5A5D63" stroke-width="1.15"/></svg>
<svg style="position:absolute;left:331.0px;top:198.0px;" width="20" height="20" viewBox="0 0 16 16" fill="none" stroke-linecap="round" stroke-linejoin="round"><path d="M6 3.5 L10.5 8 L6 12.5" stroke="#A8ABB0" stroke-width="1.26"/></svg>
<svg style="position:absolute;left:81.5px;top:250.0px;" width="20" height="20" viewBox="0 0 16 16" fill="none" stroke-linecap="round" stroke-linejoin="round"><path d="M6 3.5 L10.5 8 L6 12.5" stroke="#A8ABB0" stroke-width="1.26"/></svg>
<svg style="position:absolute;left:111.0px;top:248.0px;" width="24" height="24" viewBox="0 0 16 16" fill="none" stroke-linecap="round" stroke-linejoin="round"><path d="M0.7 1.4 L2 1 C4 1.5 5.8 2.6 7 4.5 C8 6.2 8.6 7.8 9.6 8.6 C10.6 9.4 12.3 10 13.5 10.8 L14.6 12 L12.8 12.1 L15 14.4 M0.7 1.4 C1.4 3 2 4.4 2.5 5.6 C3 6.8 2.6 8.4 2.7 9.6 L3.8 10.6 L4.8 8.8 L7 11.8" stroke="#1FA3E0" stroke-width="0.85" fill="none"/><circle cx="4.3" cy="3.7" r="0.45" fill="#1FA3E0"/></svg>
<svg style="position:absolute;left:82.0px;top:286.0px;" width="20" height="20" viewBox="0 0 16 16" fill="none" stroke-linecap="round" stroke-linejoin="round"><path d="M3.5 6 L8 10.5 L12.5 6" stroke="#A8ABB0" stroke-width="1.26"/></svg>
<svg style="position:absolute;left:111.0px;top:284.0px;" width="24" height="24" viewBox="0 0 16 16" fill="none" stroke-linecap="round" stroke-linejoin="round"><path d="M0.7 1.4 L2 1 C4 1.5 5.8 2.6 7 4.5 C8 6.2 8.6 7.8 9.6 8.6 C10.6 9.4 12.3 10 13.5 10.8 L14.6 12 L12.8 12.1 L15 14.4 M0.7 1.4 C1.4 3 2 4.4 2.5 5.6 C3 6.8 2.6 8.4 2.7 9.6 L3.8 10.6 L4.8 8.8 L7 11.8" stroke="#1FA3E0" stroke-width="0.85" fill="none"/><circle cx="4.3" cy="3.7" r="0.45" fill="#1FA3E0"/><circle cx="13.2" cy="13.6" r="2.1" fill="#28C93F"/></svg>
<svg style="position:absolute;left:109.5px;top:322.0px;" width="20" height="20" viewBox="0 0 16 16" fill="none" stroke-linecap="round" stroke-linejoin="round"><path d="M6 3.5 L10.5 8 L6 12.5" stroke="#A8ABB0" stroke-width="1.26"/></svg>
<svg style="position:absolute;left:139.0px;top:320.0px;" width="24" height="24" viewBox="0 0 16 16" fill="none" stroke-linecap="round" stroke-linejoin="round"><rect x="1.5" y="8" width="5" height="6" rx="1" fill="#43454A" stroke="#CED0D6" stroke-width="1.15"/><rect x="10" y="2" width="4.5" height="4.5" rx="1" stroke="#CED0D6" stroke-width="1.15"/><rect x="10" y="9.5" width="4.5" height="4.5" rx="1" stroke="#CED0D6" stroke-width="1.15"/><path d="M4 8 V4.3 H10 M6.5 11.7 H10" stroke="#CED0D6" stroke-width="1.15"/></svg>
<svg style="position:absolute;left:110.0px;top:358.0px;" width="20" height="20" viewBox="0 0 16 16" fill="none" stroke-linecap="round" stroke-linejoin="round"><path d="M3.5 6 L8 10.5 L12.5 6" stroke="#A8ABB0" stroke-width="1.26"/></svg>
<svg style="position:absolute;left:139.0px;top:356.0px;" width="24" height="24" viewBox="0 0 16 16" fill="none" stroke-linecap="round" stroke-linejoin="round"><rect x="1.5" y="8" width="5" height="6" rx="1" fill="#43454A" stroke="#CED0D6" stroke-width="1.15"/><rect x="10" y="2" width="4.5" height="4.5" rx="1" stroke="#CED0D6" stroke-width="1.15"/><rect x="10" y="9.5" width="4.5" height="4.5" rx="1" stroke="#CED0D6" stroke-width="1.15"/><path d="M4 8 V4.3 H10 M6.5 11.7 H10" stroke="#CED0D6" stroke-width="1.15"/></svg>
<svg style="position:absolute;left:138.0px;top:394.0px;" width="20" height="20" viewBox="0 0 16 16" fill="none" stroke-linecap="round" stroke-linejoin="round"><path d="M3.5 6 L8 10.5 L12.5 6" stroke="#A8ABB0" stroke-width="1.26"/></svg>
<svg style="position:absolute;left:167.0px;top:392.0px;" width="24" height="24" viewBox="0 0 16 16" fill="none" stroke-linecap="round" stroke-linejoin="round"><path d="M1.5 3.2 C1.5 2.8 1.8 2.5 2.2 2.5 H6 L7.6 4.2 H13.8 C14.2 4.2 14.5 4.5 14.5 4.9 V12.8 C14.5 13.2 14.2 13.5 13.8 13.5 H2.2 C1.8 13.5 1.5 13.2 1.5 12.8 Z" fill="#25324D" stroke="#548AF7" stroke-width="1.15"/></svg>
<svg style="position:absolute;left:165.5px;top:430.0px;" width="20" height="20" viewBox="0 0 16 16" fill="none" stroke-linecap="round" stroke-linejoin="round"><path d="M6 3.5 L10.5 8 L6 12.5" stroke="#A8ABB0" stroke-width="1.26"/></svg>
<svg style="position:absolute;left:195.0px;top:428.0px;" width="24" height="24" viewBox="0 0 16 16" fill="none" stroke-linecap="round" stroke-linejoin="round"><rect x="1.5" y="2.5" width="13" height="11" rx="1.5" stroke="#CED0D6" stroke-width="1.15"/><path d="M1.5 6 H14.5 M5.8 2.5 V13.5 M10.2 2.5 V13.5" stroke="#CED0D6" stroke-width="1.15"/></svg>
<svg style="position:absolute;left:165.5px;top:466.0px;" width="20" height="20" viewBox="0 0 16 16" fill="none" stroke-linecap="round" stroke-linejoin="round"><path d="M6 3.5 L10.5 8 L6 12.5" stroke="#A8ABB0" stroke-width="1.26"/></svg>
<svg style="position:absolute;left:195.0px;top:464.0px;" width="24" height="24" viewBox="0 0 16 16" fill="none" stroke-linecap="round" stroke-linejoin="round"><rect x="1.5" y="2.5" width="13" height="11" rx="1.5" stroke="#CED0D6" stroke-width="1.15"/><path d="M1.5 6 H14.5 M5.8 2.5 V13.5 M10.2 2.5 V13.5" stroke="#CED0D6" stroke-width="1.15"/></svg>
<svg style="position:absolute;left:165.5px;top:502.0px;" width="20" height="20" viewBox="0 0 16 16" fill="none" stroke-linecap="round" stroke-linejoin="round"><path d="M6 3.5 L10.5 8 L6 12.5" stroke="#A8ABB0" stroke-width="1.26"/></svg>
<svg style="position:absolute;left:195.0px;top:500.0px;" width="24" height="24" viewBox="0 0 16 16" fill="none" stroke-linecap="round" stroke-linejoin="round"><rect x="1.5" y="2.5" width="13" height="11" rx="1.5" stroke="#CED0D6" stroke-width="1.15"/><path d="M1.5 6 H14.5 M5.8 2.5 V13.5 M10.2 2.5 V13.5" stroke="#CED0D6" stroke-width="1.15"/></svg>
<svg style="position:absolute;left:165.5px;top:538.0px;" width="20" height="20" viewBox="0 0 16 16" fill="none" stroke-linecap="round" stroke-linejoin="round"><path d="M6 3.5 L10.5 8 L6 12.5" stroke="#A8ABB0" stroke-width="1.26"/></svg>
<svg style="position:absolute;left:195.0px;top:536.0px;" width="24" height="24" viewBox="0 0 16 16" fill="none" stroke-linecap="round" stroke-linejoin="round"><rect x="1.5" y="2.5" width="13" height="11" rx="1.5" stroke="#CED0D6" stroke-width="1.15"/><path d="M1.5 6 H14.5 M5.8 2.5 V13.5 M10.2 2.5 V13.5" stroke="#CED0D6" stroke-width="1.15"/></svg>
<svg style="position:absolute;left:165.5px;top:574.0px;" width="20" height="20" viewBox="0 0 16 16" fill="none" stroke-linecap="round" stroke-linejoin="round"><path d="M6 3.5 L10.5 8 L6 12.5" stroke="#A8ABB0" stroke-width="1.26"/></svg>
<svg style="position:absolute;left:195.0px;top:572.0px;" width="24" height="24" viewBox="0 0 16 16" fill="none" stroke-linecap="round" stroke-linejoin="round"><rect x="1.5" y="2.5" width="13" height="11" rx="1.5" stroke="#CED0D6" stroke-width="1.15"/><path d="M1.5 6 H14.5 M5.8 2.5 V13.5 M10.2 2.5 V13.5" stroke="#CED0D6" stroke-width="1.15"/></svg>
<svg style="position:absolute;left:138.0px;top:610.0px;" width="20" height="20" viewBox="0 0 16 16" fill="none" stroke-linecap="round" stroke-linejoin="round"><path d="M3.5 6 L8 10.5 L12.5 6" stroke="#A8ABB0" stroke-width="1.26"/></svg>
<svg style="position:absolute;left:167.0px;top:608.0px;" width="24" height="24" viewBox="0 0 16 16" fill="none" stroke-linecap="round" stroke-linejoin="round"><path d="M1.5 3.2 C1.5 2.8 1.8 2.5 2.2 2.5 H6 L7.6 4.2 H13.8 C14.2 4.2 14.5 4.5 14.5 4.9 V12.8 C14.5 13.2 14.2 13.5 13.8 13.5 H2.2 C1.8 13.5 1.5 13.2 1.5 12.8 Z" fill="#25324D" stroke="#548AF7" stroke-width="1.15"/></svg>
<svg style="position:absolute;left:195.5px;top:644.5px;" width="23" height="23" viewBox="0 0 16 16" fill="none" stroke-linecap="round" stroke-linejoin="round"><circle cx="8" cy="8" r="6.5" fill="#25324D" stroke="#548AF7" stroke-width="1.15"/><path d="M6.5 11 V5 H8.5 C9.7 5 10.3 5.7 10.3 6.7 C10.3 7.7 9.7 8.4 8.5 8.4 H6.5" stroke="#548AF7" stroke-width="0.98"/></svg>
<svg style="position:absolute;left:109.5px;top:682.0px;" width="20" height="20" viewBox="0 0 16 16" fill="none" stroke-linecap="round" stroke-linejoin="round"><path d="M6 3.5 L10.5 8 L6 12.5" stroke="#A8ABB0" stroke-width="1.26"/></svg>
<svg style="position:absolute;left:139.0px;top:680.0px;" width="24" height="24" viewBox="0 0 16 16" fill="none" stroke-linecap="round" stroke-linejoin="round"><rect x="1.5" y="8" width="5" height="6" rx="1" fill="#43454A" stroke="#CED0D6" stroke-width="1.15"/><rect x="10" y="2" width="4.5" height="4.5" rx="1" stroke="#CED0D6" stroke-width="1.15"/><rect x="10" y="9.5" width="4.5" height="4.5" rx="1" stroke="#CED0D6" stroke-width="1.15"/><path d="M4 8 V4.3 H10 M6.5 11.7 H10" stroke="#CED0D6" stroke-width="1.15"/></svg>
<svg style="position:absolute;left:109.5px;top:718.0px;" width="20" height="20" viewBox="0 0 16 16" fill="none" stroke-linecap="round" stroke-linejoin="round"><path d="M6 3.5 L10.5 8 L6 12.5" stroke="#A8ABB0" stroke-width="1.26"/></svg>
<svg style="position:absolute;left:139.0px;top:716.0px;" width="24" height="24" viewBox="0 0 16 16" fill="none" stroke-linecap="round" stroke-linejoin="round"><rect x="1.5" y="8" width="5" height="6" rx="1" fill="#43454A" stroke="#CED0D6" stroke-width="1.15"/><rect x="10" y="2" width="4.5" height="4.5" rx="1" stroke="#CED0D6" stroke-width="1.15"/><rect x="10" y="9.5" width="4.5" height="4.5" rx="1" stroke="#CED0D6" stroke-width="1.15"/><path d="M4 8 V4.3 H10 M6.5 11.7 H10" stroke="#CED0D6" stroke-width="1.15"/></svg>
<svg style="position:absolute;left:109.5px;top:754.0px;" width="20" height="20" viewBox="0 0 16 16" fill="none" stroke-linecap="round" stroke-linejoin="round"><path d="M6 3.5 L10.5 8 L6 12.5" stroke="#A8ABB0" stroke-width="1.26"/></svg>
<svg style="position:absolute;left:139.0px;top:752.0px;" width="24" height="24" viewBox="0 0 16 16" fill="none" stroke-linecap="round" stroke-linejoin="round"><rect x="1.5" y="8" width="5" height="6" rx="1" fill="#43454A" stroke="#CED0D6" stroke-width="1.15"/><rect x="10" y="2" width="4.5" height="4.5" rx="1" stroke="#CED0D6" stroke-width="1.15"/><rect x="10" y="9.5" width="4.5" height="4.5" rx="1" stroke="#CED0D6" stroke-width="1.15"/><path d="M4 8 V4.3 H10 M6.5 11.7 H10" stroke="#CED0D6" stroke-width="1.15"/></svg>
<svg style="position:absolute;left:109.5px;top:790.0px;" width="20" height="20" viewBox="0 0 16 16" fill="none" stroke-linecap="round" stroke-linejoin="round"><path d="M6 3.5 L10.5 8 L6 12.5" stroke="#A8ABB0" stroke-width="1.26"/></svg>
<svg style="position:absolute;left:139.0px;top:788.0px;" width="24" height="24" viewBox="0 0 16 16" fill="none" stroke-linecap="round" stroke-linejoin="round"><path d="M1.5 12.5 V3.2 C1.5 2.8 1.8 2.5 2.2 2.5 H6 L7.6 4.2 H13.8 C14.2 4.2 14.5 4.5 14.5 4.9 V7" stroke="#CED0D6" stroke-width="1.15"/><path d="M1.5 12.5 H6.5" stroke="#CED0D6" stroke-width="1.15"/><rect x="8" y="8.5" width="7" height="2.8" rx="0.6" fill="#548AF7"/><rect x="8" y="12" width="7" height="2.8" rx="0.6" fill="#548AF7"/><path d="M9.3 9.9 H10.3 M9.3 13.4 H10.3" stroke="#1E1F22" stroke-width="0.8"/></svg>
<svg style="position:absolute;left:386.0px;top:139.5px;" width="24" height="24" viewBox="0 0 16 16" fill="none" stroke-linecap="round" stroke-linejoin="round"><path d="M0.7 1.4 L2 1 C4 1.5 5.8 2.6 7 4.5 C8 6.2 8.6 7.8 9.6 8.6 C10.6 9.4 12.3 10 13.5 10.8 L14.6 12 L12.8 12.1 L15 14.4 M0.7 1.4 C1.4 3 2 4.4 2.5 5.6 C3 6.8 2.6 8.4 2.7 9.6 L3.8 10.6 L4.8 8.8 L7 11.8" stroke="#1FA3E0" stroke-width="0.85" fill="none"/><circle cx="4.3" cy="3.7" r="0.45" fill="#1FA3E0"/></svg>
<svg style="position:absolute;left:764.0px;top:142.0px;" width="20" height="20" viewBox="0 0 16 16" fill="none" stroke-linecap="round" stroke-linejoin="round"><path d="M4 4 L12 12 M12 4 L4 12" stroke="#8C8F94" stroke-width="1.49"/></svg>
<svg style="position:absolute;left:1392.0px;top:140.0px;" width="24" height="24" viewBox="0 0 16 16" fill="none" stroke-linecap="round" stroke-linejoin="round"><circle cx="8" cy="3" r="1.1" fill="#CED0D6"/><circle cx="8" cy="8" r="1.1" fill="#CED0D6"/><circle cx="8" cy="13" r="1.1" fill="#CED0D6"/></svg>
<svg style="position:absolute;left:1452.5px;top:140.5px;" width="23" height="23" viewBox="0 0 16 16" fill="none" stroke-linecap="round" stroke-linejoin="round"><circle cx="8" cy="8" r="6.5" fill="#25324D" stroke="#548AF7" stroke-width="1.15"/><path d="M6.5 11 V5 H8.5 C9.7 5 10.3 5.7 10.3 6.7 C10.3 7.7 9.7 8.4 8.5 8.4 H6.5" stroke="#548AF7" stroke-width="0.98"/></svg>
<svg style="position:absolute;left:1768.0px;top:142.5px;" width="19" height="19" viewBox="0 0 16 16" fill="none" stroke-linecap="round" stroke-linejoin="round"><path d="M4 4 L12 12 M12 4 L4 12" stroke="#8C8F94" stroke-width="1.49"/></svg>
<svg style="position:absolute;left:2458.7px;top:140.0px;" width="24" height="24" viewBox="0 0 16 16" fill="none" stroke-linecap="round" stroke-linejoin="round"><circle cx="8" cy="3" r="1.1" fill="#CED0D6"/><circle cx="8" cy="8" r="1.1" fill="#CED0D6"/><circle cx="8" cy="13" r="1.1" fill="#CED0D6"/></svg>
<svg style="position:absolute;left:387.0px;top:196.5px;" width="24" height="24" viewBox="0 0 16 16" fill="none" stroke-linecap="round" stroke-linejoin="round"><path d="M3.5 2.5 L13.5 8 L3.5 13.5 Z" fill="#253627" stroke="#57965C" stroke-width="1.1"/></svg>
<svg style="position:absolute;left:435.0px;top:196.5px;" width="24" height="24" viewBox="0 0 16 16" fill="none" stroke-linecap="round" stroke-linejoin="round"><circle cx="8" cy="8" r="6.6" stroke="#CED0D6" stroke-width="1.15"/><path d="M8 4.6 V8.2 L10.8 10.2" stroke="#CED0D6" stroke-width="1.15"/></svg>
<svg style="position:absolute;left:474.0px;top:196.5px;" width="24" height="24" viewBox="0 0 16 16" fill="none" stroke-linecap="round" stroke-linejoin="round"><circle cx="8" cy="8" r="6.6" stroke="#CED0D6" stroke-width="1.15"/><path d="M6.3 11.8 V5.4" stroke="#CED0D6" stroke-width="1.15"/><circle cx="8.5" cy="7.6" r="2.2" stroke="#CED0D6" stroke-width="1.15"/></svg>
<svg style="position:absolute;left:513.0px;top:196.5px;" width="24" height="24" viewBox="0 0 16 16" fill="none" stroke-linecap="round" stroke-linejoin="round"><path d="M8.00 1.25 L8.58 1.38 L9.10 1.75 L9.54 2.25 L9.90 2.78 L10.22 3.24 L10.57 3.54 L11.02 3.69 L11.57 3.75 L12.21 3.79 L12.86 3.92 L13.44 4.19 L13.85 4.62 L14.02 5.19 L13.97 5.83 L13.75 6.46 L13.47 7.04 L13.24 7.54 L13.15 8.00 L13.24 8.46 L13.47 8.96 L13.75 9.54 L13.97 10.17 L14.02 10.81 L13.85 11.37 L13.44 11.81 L12.86 12.08 L12.21 12.21 L11.57 12.25 L11.02 12.31 L10.58 12.46 L10.22 12.76 L9.90 13.22 L9.54 13.75 L9.10 14.25 L8.58 14.62 L8.00 14.75 L7.42 14.62 L6.90 14.25 L6.46 13.75 L6.10 13.22 L5.78 12.76 L5.42 12.46 L4.98 12.31 L4.43 12.25 L3.79 12.21 L3.14 12.08 L2.56 11.81 L2.15 11.38 L1.98 10.81 L2.03 10.17 L2.25 9.54 L2.53 8.96 L2.76 8.46 L2.85 8.00 L2.76 7.54 L2.53 7.04 L2.25 6.46 L2.03 5.83 L1.98 5.19 L2.15 4.63 L2.56 4.19 L3.14 3.92 L3.79 3.79 L4.43 3.75 L4.98 3.69 L5.43 3.54 L5.78 3.24 L6.10 2.78 L6.46 2.25 L6.90 1.75 L7.42 1.38 L8.00 1.25 Z" stroke="#CED0D6" stroke-width="1.15"/><circle cx="8" cy="8" r="2.4" stroke="#CED0D6" stroke-width="1.15"/></svg>
<svg style="position:absolute;left:564.0px;top:197.5px;" width="22" height="22" viewBox="0 0 16 16" fill="none" stroke-linecap="round" stroke-linejoin="round"><path d="M2 2.5 H14 M2 13.5 H14" stroke="#CED0D6" stroke-width="1.15"/><rect x="2" y="5" width="12" height="6" rx="1" stroke="#CED0D6" stroke-width="1.15"/><path d="M4.8 5 V11" stroke="#CED0D6" stroke-width="1.15"/></svg>
<svg style="position:absolute;left:679.0px;top:198.5px;" width="20" height="20" viewBox="0 0 16 16" fill="none" stroke-linecap="round" stroke-linejoin="round"><path d="M3.5 6 L8 10.5 L12.5 6" stroke="#A8ABB0" stroke-width="1.26"/></svg>
<svg style="position:absolute;left:866.0px;top:198.5px;" width="20" height="20" viewBox="0 0 16 16" fill="none" stroke-linecap="round" stroke-linejoin="round"><path d="M3.5 6 L8 10.5 L12.5 6" stroke="#A8ABB0" stroke-width="1.26"/></svg>
<svg style="position:absolute;left:1325.0px;top:196.5px;" width="24" height="24" viewBox="0 0 16 16" fill="none" stroke-linecap="round" stroke-linejoin="round"><rect x="1.5" y="8" width="5" height="6" rx="1" fill="#43454A" stroke="#CED0D6" stroke-width="1.15"/><rect x="10" y="2" width="4.5" height="4.5" rx="1" stroke="#CED0D6" stroke-width="1.15"/><rect x="10" y="9.5" width="4.5" height="4.5" rx="1" stroke="#CED0D6" stroke-width="1.15"/><path d="M4 8 V4.3 H10 M6.5 11.7 H10" stroke="#CED0D6" stroke-width="1.15"/></svg>
<svg style="position:absolute;left:1396.0px;top:198.5px;" width="20" height="20" viewBox="0 0 16 16" fill="none" stroke-linecap="round" stroke-linejoin="round"><path d="M3.5 6 L8 10.5 L12.5 6" stroke="#A8ABB0" stroke-width="1.26"/></svg>
<svg style="position:absolute;left:1325.0px;top:245.0px;" width="22" height="22" viewBox="0 0 16 16" fill="none" stroke-linecap="round" stroke-linejoin="round"><path d="M2.2 5.5 L6.2 9.6 L13.6 2" stroke="#5A9E5F" stroke-width="2.2"/><path d="M2.2 14.6 L4.6 12.4 L6.6 14.4 L8.8 12.4 L10.8 14.4 L13.4 12" stroke="#5A9E5F" stroke-width="1.1"/></svg>
<svg style="position:absolute;left:1373.0px;top:245.5px;" width="20" height="20" viewBox="0 0 16 16" fill="none" stroke-linecap="round" stroke-linejoin="round"><path d="M3.5 10 L8 5.5 L12.5 10" stroke="#A8ABB0" stroke-width="1.26"/></svg>
<svg style="position:absolute;left:1404.7px;top:244.5px;" width="20" height="20" viewBox="0 0 16 16" fill="none" stroke-linecap="round" stroke-linejoin="round"><path d="M3.5 6 L8 10.5 L12.5 6" stroke="#A8ABB0" stroke-width="1.26"/></svg>
<svg style="position:absolute;left:489.5px;top:456.5px;" width="22" height="22" viewBox="0 0 16 16" fill="none" stroke-linecap="round" stroke-linejoin="round"><path d="M8 1.5 C10.8 1.5 12.5 3.5 12.5 6 C12.5 8 11.3 9.2 10.5 10.2 V11.2 H5.5 V10.2 C4.7 9.2 3.5 8 3.5 6 C3.5 3.5 5.2 1.5 8 1.5 Z" fill="#F2C55C"/><path d="M5.8 12.4 H10.2 M6.3 13.8 H9.7" stroke="#CED0D6" stroke-width="0.9"/></svg>
<svg style="position:absolute;left:1272px;top:548px" width="74" height="6" viewBox="0 0 74 6"><path d="M0 4 L3 1.5 L6 4 L9 1.5 L12 4 L15 1.5 L18 4 L21 1.5 L24 4 L27 1.5 L30 4 L33 1.5 L36 4 L39 1.5 L42 4 L45 1.5 L48 4 L51 1.5 L54 4 L57 1.5 L60 4 L63 1.5 L66 4 L69 1.5 L72 4" stroke="#6AAB73" stroke-width="1" fill="none"/></svg>
<svg style="position:absolute;left:1453.0px;top:196.5px;" width="24" height="24" viewBox="0 0 16 16" fill="none" stroke-linecap="round" stroke-linejoin="round"><circle cx="7.2" cy="7.6" r="6" fill="#25324D" stroke="#548AF7" stroke-width="1"/><path d="M5.6 11.5 V4.5 H7.8 C9 4.5 9.6 5.2 9.6 6.3 C9.6 7.4 9 8.1 7.8 8.1 H5.6" stroke="#548AF7" stroke-width="1"/><path d="M10 9.5 L15 12.3 L10 15.2 Z" fill="#253627" stroke="#57965C" stroke-width="1"/></svg>
<svg style="position:absolute;left:1492.0px;top:197.5px;" width="22" height="22" viewBox="0 0 16 16" fill="none" stroke-linecap="round" stroke-linejoin="round"><path d="M8 2 L13.5 7.5 H10.5 V14 H5.5 V7.5 H2.5 Z" stroke="#6F737A" stroke-width="1.15"/></svg>
<svg style="position:absolute;left:1530.0px;top:196.5px;" width="24" height="24" viewBox="0 0 16 16" fill="none" stroke-linecap="round" stroke-linejoin="round"><path d="M11.2 3.4 A5.8 5.8 0 0 0 2.4 9.8 M0.4 7.6 L2.4 10.1 L4.8 7.6 M4.9 13.1 A5.8 5.8 0 0 0 13.6 6.4 M11.3 9 L13.6 6.2 L15.8 8.7" stroke="#CED0D6" stroke-width="1.15"/></svg>
<svg style="position:absolute;left:1570.0px;top:197.5px;" width="22" height="22" viewBox="0 0 16 16" fill="none" stroke-linecap="round" stroke-linejoin="round"><path d="M5.7 1.7 L1.6 5.3 L5.7 9 M1.6 5.3 H10.5 A4 4 0 0 1 10.5 13.3 H5.3" stroke="#6F737A" stroke-width="1.15"/></svg>
<svg style="position:absolute;left:1608.0px;top:196.5px;" width="24" height="24" viewBox="0 0 16 16" fill="none" stroke-linecap="round" stroke-linejoin="round"><path d="M10.3 0.6 L7.6 3.4 L10.3 6.2 M7.6 3.4 H15.6 M0.4 10.4 H8.6 M6 7.6 L8.8 10.4 L6 13.2" stroke="#6F737A" stroke-width="1.15"/></svg>
<svg style="position:absolute;left:2469.0px;top:245.0px;" width="20" height="20" viewBox="0 0 16 16" fill="none" stroke-linecap="round" stroke-linejoin="round"><path d="M2.5 8.5 L6 12 L13.5 3.5" stroke="#5A9E5F" stroke-width="2.1"/></svg>
<svg style="position:absolute;left:2517.0px;top:138.0px;" width="28" height="28" viewBox="0 0 16 16" fill="none" stroke-linecap="round" stroke-linejoin="round"><path d="M1.5 3.2 C1.5 2.8 1.8 2.5 2.2 2.5 H6 L7.6 4.2 H13.8 C14.2 4.2 14.5 4.5 14.5 4.9 V12.8 C14.5 13.2 14.2 13.5 13.8 13.5 H2.2 C1.8 13.5 1.5 13.2 1.5 12.8 Z" stroke="#CED0D6" stroke-width="1.15"/></svg>
<div style="position:absolute;left:2512px;top:189px;width:36px;height:1px;background:#393B40;"></div>
<svg style="position:absolute;left:2517.0px;top:213.5px;" width="28" height="28" viewBox="0 0 16 16" fill="none" stroke-linecap="round" stroke-linejoin="round"><path d="M2.5 1.5 V14.5 M2.5 4 H5 M2.5 11 H5" stroke="#CED0D6" stroke-width="1.15"/><rect x="5" y="2" width="9" height="4.5" rx="1.3" stroke="#CED0D6" stroke-width="1.15"/><rect x="5" y="9" width="9" height="4.5" rx="1.3" stroke="#CED0D6" stroke-width="1.15"/></svg>
<svg style="position:absolute;left:2417.0px;top:992.0px;" width="24" height="24" viewBox="0 0 16 16" fill="none" stroke-linecap="round" stroke-linejoin="round"><circle cx="8" cy="3" r="1.1" fill="#CED0D6"/><circle cx="8" cy="8" r="1.1" fill="#CED0D6"/><circle cx="8" cy="13" r="1.1" fill="#CED0D6"/></svg>
<div style="position:absolute;left:2458px;top:1003px;width:20px;height:2px;background:#CED0D6;"></div>
<svg style="position:absolute;left:97px;top:1063px" width="8" height="8" viewBox="0 0 8 8"><path d="M8 0 V8 H0 Z" fill="#CED0D6"/></svg>
<svg style="position:absolute;left:139.0px;top:1048.0px;" width="24" height="24" viewBox="0 0 16 16" fill="none" stroke-linecap="round" stroke-linejoin="round"><path d="M8 2 V14 M2 8 H14" stroke="#CED0D6" stroke-width="1.15"/><path d="M16 12.3 V16 H12.3 Z" fill="#CED0D6"/></svg>
<svg style="position:absolute;left:177.5px;top:1048.0px;" width="24" height="24" viewBox="0 0 16 16" fill="none" stroke-linecap="round" stroke-linejoin="round"><path d="M1.2 8 C2.8 5 5.2 3.5 8 3.5 C10.8 3.5 13.2 5 14.8 8 C13.2 11 10.8 12.5 8 12.5 C5.2 12.5 2.8 11 1.2 8 Z" stroke="#CED0D6" stroke-width="1.15"/><circle cx="8" cy="8" r="2.2" stroke="#CED0D6" stroke-width="1.15"/><path d="M16 12.3 V16 H12.3 Z" fill="#CED0D6"/></svg>
<svg style="position:absolute;left:216.5px;top:1048.0px;" width="24" height="24" viewBox="0 0 16 16" fill="none" stroke-linecap="round" stroke-linejoin="round"><path d="M9.5 4 H3 C2.2 4 1.5 4.7 1.5 5.5 V12.5 C1.5 13.3 2.2 14 3 14 H10 C10.8 14 11.5 13.3 11.5 12.5 V9" stroke="#CED0D6" stroke-width="1.15"/><path d="M12 1 V7 M9 4 H15" stroke="#CED0D6" stroke-width="1.15"/></svg>
<div style="position:absolute;left:252px;top:1046px;width:2px;height:29px;background:#393B40;"></div>
<svg style="position:absolute;left:267.0px;top:1049.0px;" width="22" height="22" viewBox="0 0 16 16" fill="none" stroke-linecap="round" stroke-linejoin="round"><path d="M4.5 6 L8 2.5 L11.5 6 M4.5 10 L8 13.5 L11.5 10" stroke="#CED0D6" stroke-width="1.15"/></svg>
<svg style="position:absolute;left:306.0px;top:1049.0px;" width="22" height="22" viewBox="0 0 16 16" fill="none" stroke-linecap="round" stroke-linejoin="round"><path d="M4.5 2.5 L8 6 L11.5 2.5 M4.5 13.5 L8 10 L11.5 13.5" stroke="#CED0D6" stroke-width="1.15"/></svg>
<svg style="position:absolute;left:115.0px;top:1102.0px;" width="20" height="20" viewBox="0 0 16 16" fill="none" stroke-linecap="round" stroke-linejoin="round"><path d="M3.5 6 L8 10.5 L12.5 6" stroke="#A8ABB0" stroke-width="1.26"/></svg>
<svg style="position:absolute;left:144.0px;top:1100.0px;" width="24" height="24" viewBox="0 0 16 16" fill="none" stroke-linecap="round" stroke-linejoin="round"><path d="M1.5 3.2 C1.5 2.8 1.8 2.5 2.2 2.5 H6 L7.6 4.2 H13.8 C14.2 4.2 14.5 4.5 14.5 4.9 V12.8 C14.5 13.2 14.2 13.5 13.8 13.5 H2.2 C1.8 13.5 1.5 13.2 1.5 12.8 Z" fill="#43454A" stroke="#CED0D6" stroke-width="1.15"/></svg>
<svg style="position:absolute;left:143.0px;top:1138.0px;" width="20" height="20" viewBox="0 0 16 16" fill="none" stroke-linecap="round" stroke-linejoin="round"><path d="M3.5 6 L8 10.5 L12.5 6" stroke="#A8ABB0" stroke-width="1.26"/></svg>
<svg style="position:absolute;left:172.5px;top:1136.0px;" width="24" height="24" viewBox="0 0 16 16" fill="none" stroke-linecap="round" stroke-linejoin="round"><path d="M0.7 1.4 L2 1 C4 1.5 5.8 2.6 7 4.5 C8 6.2 8.6 7.8 9.6 8.6 C10.6 9.4 12.3 10 13.5 10.8 L14.6 12 L12.8 12.1 L15 14.4 M0.7 1.4 C1.4 3 2 4.4 2.5 5.6 C3 6.8 2.6 8.4 2.7 9.6 L3.8 10.6 L4.8 8.8 L7 11.8" stroke="#1FA3E0" stroke-width="0.85" fill="none"/><circle cx="4.3" cy="3.7" r="0.45" fill="#1FA3E0"/></svg>
<svg style="position:absolute;left:201.0px;top:1172.0px;" width="24" height="24" viewBox="0 0 16 16" fill="none" stroke-linecap="round" stroke-linejoin="round"><path d="M12 3.2 H7 C5 3.2 3.8 5 3.8 8 C3.8 11 5 12.9 7 12.9 H12 Z" stroke="#CED0D6" stroke-width="1.26"/><path d="M12 5.3 H15.6 M12 10.7 H15.6" stroke="#CED0D6" stroke-width="1.26"/><rect x="0.5" y="6.3" width="2.8" height="3.4" rx="0.8" stroke="#CED0D6" stroke-width="1.26"/></svg>
<svg style="position:absolute;left:143.0px;top:1210.0px;" width="20" height="20" viewBox="0 0 16 16" fill="none" stroke-linecap="round" stroke-linejoin="round"><path d="M3.5 6 L8 10.5 L12.5 6" stroke="#A8ABB0" stroke-width="1.26"/></svg>
<svg style="position:absolute;left:172.5px;top:1208.0px;" width="24" height="24" viewBox="0 0 16 16" fill="none" stroke-linecap="round" stroke-linejoin="round"><path d="M0.7 1.4 L2 1 C4 1.5 5.8 2.6 7 4.5 C8 6.2 8.6 7.8 9.6 8.6 C10.6 9.4 12.3 10 13.5 10.8 L14.6 12 L12.8 12.1 L15 14.4 M0.7 1.4 C1.4 3 2 4.4 2.5 5.6 C3 6.8 2.6 8.4 2.7 9.6 L3.8 10.6 L4.8 8.8 L7 11.8" stroke="#1FA3E0" stroke-width="0.85" fill="none"/><circle cx="4.3" cy="3.7" r="0.45" fill="#1FA3E0"/></svg>
<svg style="position:absolute;left:171.0px;top:1246.0px;" width="20" height="20" viewBox="0 0 16 16" fill="none" stroke-linecap="round" stroke-linejoin="round"><path d="M3.5 6 L8 10.5 L12.5 6" stroke="#A8ABB0" stroke-width="1.26"/></svg>
<svg style="position:absolute;left:201.0px;top:1244.0px;" width="24" height="24" viewBox="0 0 16 16" fill="none" stroke-linecap="round" stroke-linejoin="round"><path d="M12 3.2 H7 C5 3.2 3.8 5 3.8 8 C3.8 11 5 12.9 7 12.9 H12 Z" stroke="#CED0D6" stroke-width="1.26"/><path d="M12 5.3 H15.6 M12 10.7 H15.6" stroke="#CED0D6" stroke-width="1.26"/><rect x="0.5" y="6.3" width="2.8" height="3.4" rx="0.8" stroke="#CED0D6" stroke-width="1.26"/><circle cx="12.8" cy="13.6" r="1.5" fill="#28C93F"/></svg>
<svg style="position:absolute;left:229.5px;top:1280.0px;" width="24" height="24" viewBox="0 0 16 16" fill="none" stroke-linecap="round" stroke-linejoin="round"><path d="M0.7 1.4 L2 1 C4 1.5 5.8 2.6 7 4.5 C8 6.2 8.6 7.8 9.6 8.6 C10.6 9.4 12.3 10 13.5 10.8 L14.6 12 L12.8 12.1 L15 14.4 M0.7 1.4 C1.4 3 2 4.4 2.5 5.6 C3 6.8 2.6 8.4 2.7 9.6 L3.8 10.6 L4.8 8.8 L7 11.8" stroke="#1FA3E0" stroke-width="0.85" fill="none"/><circle cx="4.3" cy="3.7" r="0.45" fill="#1FA3E0"/></svg>
<svg style="position:absolute;left:478.0px;top:1050.0px;" width="22" height="22" viewBox="0 0 16 16" fill="none" stroke-linecap="round" stroke-linejoin="round"><rect x="1.5" y="2.5" width="13" height="11" rx="1.5" stroke="#CED0D6" stroke-width="1.15"/><path d="M4.5 6 L6.5 8 L4.5 10 M8 10.5 H11" stroke="#CED0D6" stroke-width="1.15"/></svg>
<svg style="position:absolute;left:582.0px;top:1050.0px;" width="22" height="22" viewBox="0 0 16 16" fill="none" stroke-linecap="round" stroke-linejoin="round"><rect x="1.5" y="2.5" width="13" height="11" rx="1.5" stroke="#CED0D6" stroke-width="1.15"/><path d="M1.5 6 H14.5 M5.8 2.5 V13.5 M10.2 2.5 V13.5" stroke="#CED0D6" stroke-width="1.15"/></svg>
<svg style="position:absolute;left:679.2px;top:1051.5px;" width="19" height="19" viewBox="0 0 16 16" fill="none" stroke-linecap="round" stroke-linejoin="round"><path d="M4 4 L12 12 M12 4 L4 12" stroke="#7D8086" stroke-width="1.49"/></svg>
<svg style="position:absolute;left:477.0px;top:1101.0px;" width="24" height="24" viewBox="0 0 16 16" fill="none" stroke-linecap="round" stroke-linejoin="round"><rect x="1.5" y="2.5" width="13" height="11" rx="1.5" stroke="#CED0D6" stroke-width="1.15"/><path d="M1.5 6 H14.5 M5.8 2.5 V13.5 M10.2 2.5 V13.5" stroke="#CED0D6" stroke-width="1.15"/></svg>
<svg style="position:absolute;left:516.0px;top:1101.0px;" width="24" height="24" viewBox="0 0 16 16" fill="none" stroke-linecap="round" stroke-linejoin="round"><path d="M2 2 V14 H14.5" stroke="#CED0D6" stroke-width="1.15"/><path d="M4 10.5 L6.5 6.5 L9 9 L13 4.5" stroke="#CED0D6" stroke-width="1.15"/><circle cx="6.5" cy="6.5" r="1" stroke="#CED0D6" stroke-width="0.92"/><circle cx="9" cy="9" r="1" stroke="#CED0D6" stroke-width="0.92"/><circle cx="13" cy="4.5" r="1" stroke="#CED0D6" stroke-width="0.92"/></svg>
<svg style="position:absolute;left:566.0px;top:1101.0px;" width="24" height="24" viewBox="0 0 16 16" fill="none" stroke-linecap="round" stroke-linejoin="round"><path d="M11.2 3.4 A5.8 5.8 0 0 0 2.4 9.8 M0.4 7.6 L2.4 10.1 L4.8 7.6 M4.9 13.1 A5.8 5.8 0 0 0 13.6 6.4 M11.3 9 L13.6 6.2 L15.8 8.7" stroke="#CED0D6" stroke-width="1.15"/></svg>
<svg style="position:absolute;left:606.0px;top:1101.0px;" width="24" height="24" viewBox="0 0 16 16" fill="none" stroke-linecap="round" stroke-linejoin="round"><circle cx="8" cy="8" r="6.6" stroke="#CED0D6" stroke-width="1.15"/><path d="M8 4.6 V8.2 L10.8 10.2" stroke="#CED0D6" stroke-width="1.15"/><path d="M16 12 V16 H12 Z" fill="#CED0D6"/></svg>
<svg style="position:absolute;left:693.0px;top:1102.0px;" width="22" height="22" viewBox="0 0 16 16" fill="none" stroke-linecap="round" stroke-linejoin="round"><path d="M8 2 V14 M2 8 H14" stroke="#CED0D6" stroke-width="1.15"/></svg>
<div style="position:absolute;left:734px;top:1112px;width:19px;height:2px;background:#CED0D6;"></div>
<svg style="position:absolute;left:772.0px;top:1102.0px;" width="22" height="22" viewBox="0 0 16 16" fill="none" stroke-linecap="round" stroke-linejoin="round"><path d="M5.7 1.7 L1.6 5.3 L5.7 9 M1.6 5.3 H10.5 A4 4 0 0 1 10.5 13.3 H5.3" stroke="#6F737A" stroke-width="1.15"/></svg>
<svg style="position:absolute;left:810.0px;top:1101.0px;" width="24" height="24" viewBox="0 0 16 16" fill="none" stroke-linecap="round" stroke-linejoin="round"><path d="M1.2 8 C2.8 5 5.2 3.5 8 3.5 C10.8 3.5 13.2 5 14.8 8 M8 5.8 C6.8 5.8 5.8 6.8 5.8 8 C5.8 9 6.4 9.8 7.2 10.1" stroke="#6F737A" stroke-width="1.15"/><path d="M11.5 8 L14.5 11 H13 V14.5 H10 V11 H8.5 Z" fill="#6F737A"/></svg>
<svg style="position:absolute;left:849.5px;top:1102.0px;" width="22" height="22" viewBox="0 0 16 16" fill="none" stroke-linecap="round" stroke-linejoin="round"><path d="M8 2 L13.5 7.5 H10.5 V14 H5.5 V7.5 H2.5 Z" stroke="#6F737A" stroke-width="1.15"/></svg>
<svg style="position:absolute;left:966.0px;top:1104.0px;" width="18" height="18" viewBox="0 0 16 16" fill="none" stroke-linecap="round" stroke-linejoin="round"><path d="M3.5 6 L8 10.5 L12.5 6" stroke="#6F737A" stroke-width="1.26"/></svg>
<svg style="position:absolute;left:1069.0px;top:1102.0px;" width="22" height="22" viewBox="0 0 16 16" fill="none" stroke-linecap="round" stroke-linejoin="round"><path d="M5.5 1.5 H10.5 M6.5 1.5 V6 L4 9 H12 L9.5 6 V1.5 M8 9 V14.5" stroke="#CED0D6" stroke-width="1.15"/></svg>
<svg style="position:absolute;left:1108.0px;top:1102.0px;" width="22" height="22" viewBox="0 0 16 16" fill="none" stroke-linecap="round" stroke-linejoin="round"><circle cx="7" cy="7" r="5" stroke="#CED0D6" stroke-width="1.26"/><path d="M10.6 10.6 L14.2 14.2" stroke="#CED0D6" stroke-width="1.26"/></svg>
<svg style="position:absolute;left:1145.5px;top:1101.0px;" width="24" height="24" viewBox="0 0 16 16" fill="none" stroke-linecap="round" stroke-linejoin="round"><rect x="1.5" y="2" width="11" height="11.5" rx="1.5" stroke="#CED0D6" stroke-width="1"/><path d="M5 2 V13.5" stroke="#CED0D6" stroke-width="1"/><path d="M8 8.5 H15.5 L12.7 11.8 V15 L10.8 14 V11.8 Z" fill="#2B2D30" stroke="#548AF7" stroke-width="1"/></svg>
<svg style="position:absolute;left:2248.0px;top:1105.0px;" width="16" height="16" viewBox="0 0 16 16" fill="none" stroke-linecap="round" stroke-linejoin="round"><path d="M3.5 6 L8 10.5 L12.5 6" stroke="#CED0D6" stroke-width="1.26"/></svg>
<svg style="position:absolute;left:2292.0px;top:1102.0px;" width="22" height="22" viewBox="0 0 16 16" fill="none" stroke-linecap="round" stroke-linejoin="round"><path d="M8 1.5 V10 M4.5 6.5 L8 10 L11.5 6.5 M2.5 10.5 V14 H13.5 V10.5" stroke="#CED0D6" stroke-width="1.15"/></svg>
<svg style="position:absolute;left:2331.0px;top:1102.0px;" width="22" height="22" viewBox="0 0 16 16" fill="none" stroke-linecap="round" stroke-linejoin="round"><path d="M8 10.5 V2 M4.5 5.5 L8 2 L11.5 5.5 M2.5 10.5 V14 H13.5 V10.5" stroke="#CED0D6" stroke-width="1.15"/></svg>
<svg style="position:absolute;left:2369.5px;top:1101.0px;" width="24" height="24" viewBox="0 0 16 16" fill="none" stroke-linecap="round" stroke-linejoin="round"><path d="M10.3 0.6 L7.6 3.4 L10.3 6.2 M7.6 3.4 H15.6 M0.4 10.4 H8.6 M6 7.6 L8.8 10.4 L6 13.2" stroke="#CED0D6" stroke-width="1.15"/><path d="M16 12.3 V16 H12.3 Z" fill="#CED0D6"/></svg>
<svg style="position:absolute;left:2418.0px;top:1101.0px;" width="24" height="24" viewBox="0 0 16 16" fill="none" stroke-linecap="round" stroke-linejoin="round"><path d="M1.2 8 C2.8 5 5.2 3.5 8 3.5 C10.8 3.5 13.2 5 14.8 8 C13.2 11 10.8 12.5 8 12.5 C5.2 12.5 2.8 11 1.2 8 Z" stroke="#CED0D6" stroke-width="1.15"/><circle cx="8" cy="8" r="2.2" stroke="#CED0D6" stroke-width="1.15"/><path d="M16 12.3 V16 H12.3 Z" fill="#CED0D6"/></svg>
<svg style="position:absolute;left:2459.0px;top:1101.0px;" width="24" height="24" viewBox="0 0 16 16" fill="none" stroke-linecap="round" stroke-linejoin="round"><path d="M8.00 1.25 L8.58 1.38 L9.10 1.75 L9.54 2.25 L9.90 2.78 L10.22 3.24 L10.57 3.54 L11.02 3.69 L11.57 3.75 L12.21 3.79 L12.86 3.92 L13.44 4.19 L13.85 4.62 L14.02 5.19 L13.97 5.83 L13.75 6.46 L13.47 7.04 L13.24 7.54 L13.15 8.00 L13.24 8.46 L13.47 8.96 L13.75 9.54 L13.97 10.17 L14.02 10.81 L13.85 11.37 L13.44 11.81 L12.86 12.08 L12.21 12.21 L11.57 12.25 L11.02 12.31 L10.58 12.46 L10.22 12.76 L9.90 13.22 L9.54 13.75 L9.10 14.25 L8.58 14.62 L8.00 14.75 L7.42 14.62 L6.90 14.25 L6.46 13.75 L6.10 13.22 L5.78 12.76 L5.42 12.46 L4.98 12.31 L4.43 12.25 L3.79 12.21 L3.14 12.08 L2.56 11.81 L2.15 11.38 L1.98 10.81 L2.03 10.17 L2.25 9.54 L2.53 8.96 L2.76 8.46 L2.85 8.00 L2.76 7.54 L2.53 7.04 L2.25 6.46 L2.03 5.83 L1.98 5.19 L2.15 4.63 L2.56 4.19 L3.14 3.92 L3.79 3.79 L4.43 3.75 L4.98 3.69 L5.43 3.54 L5.78 3.24 L6.10 2.78 L6.46 2.25 L6.90 1.75 L7.42 1.38 L8.00 1.25 Z" stroke="#CED0D6" stroke-width="1.15"/><circle cx="8" cy="8" r="2.4" stroke="#CED0D6" stroke-width="1.15"/><path d="M15.8 13.3 V15.8 H13.3 Z" fill="#CED0D6"/></svg>
<svg style="position:absolute;left:502.3px;top:1145.5px;" width="24" height="24" viewBox="0 0 16 16" fill="none" stroke-linecap="round" stroke-linejoin="round"><rect x="3.5" y="2" width="11" height="11" rx="1.5" stroke="#CED0D6" stroke-width="1.15"/><path d="M6 2 V13" stroke="#CED0D6" stroke-width="1.15"/><rect x="3.5" y="2" width="2.5" height="11" fill="#5A5D63"/><circle cx="3" cy="13.3" r="1.6" fill="#26282B" stroke="#CED0D6" stroke-width="1.03"/></svg>
<svg style="position:absolute;left:701.4px;top:1147.0px;" width="20" height="20" viewBox="0 0 16 16" fill="none" stroke-linecap="round" stroke-linejoin="round"><path d="M2 2.5 H14 L9.5 8 V14 L6.5 12.5 V8 Z" stroke="#CED0D6" stroke-width="1.15"/></svg>
<svg style="position:absolute;left:748.5px;top:1148.0px;" width="19" height="19" viewBox="0 0 16 16" fill="none" stroke-linecap="round" stroke-linejoin="round"><path d="M8 2 L11.2 6.2 H4.8 Z M8 14 L11.2 9.8 H4.8 Z" fill="#A8ABB0"/></svg>
<svg style="position:absolute;left:790.0px;top:1145.5px;" width="24" height="24" viewBox="0 0 16 16" fill="none" stroke-linecap="round" stroke-linejoin="round"><rect x="3.5" y="2" width="11" height="11" rx="1.5" stroke="#CED0D6" stroke-width="1.15"/><path d="M6 2 V13" stroke="#CED0D6" stroke-width="1.15"/><rect x="3.5" y="2" width="2.5" height="11" fill="#5A5D63"/><circle cx="3" cy="13.3" r="1.6" fill="#26282B" stroke="#CED0D6" stroke-width="1.03"/></svg>
<svg style="position:absolute;left:1012.8px;top:1147.0px;" width="20" height="20" viewBox="0 0 16 16" fill="none" stroke-linecap="round" stroke-linejoin="round"><path d="M2 2.5 H14 L9.5 8 V14 L6.5 12.5 V8 Z" stroke="#CED0D6" stroke-width="1.15"/></svg>
<svg style="position:absolute;left:1060.5px;top:1148.0px;" width="19" height="19" viewBox="0 0 16 16" fill="none" stroke-linecap="round" stroke-linejoin="round"><path d="M8 2 L11.2 6.2 H4.8 Z M8 14 L11.2 9.8 H4.8 Z" fill="#A8ABB0"/></svg>
<svg style="position:absolute;left:1102.3px;top:1145.5px;" width="24" height="24" viewBox="0 0 16 16" fill="none" stroke-linecap="round" stroke-linejoin="round"><rect x="3.5" y="2" width="11" height="11" rx="1.5" stroke="#CED0D6" stroke-width="1.15"/><path d="M6 2 V13" stroke="#CED0D6" stroke-width="1.15"/><rect x="3.5" y="2" width="2.5" height="11" fill="#5A5D63"/><circle cx="3" cy="13.3" r="1.6" fill="#26282B" stroke="#CED0D6" stroke-width="1.03"/></svg>
<svg style="position:absolute;left:1312.8px;top:1147.0px;" width="20" height="20" viewBox="0 0 16 16" fill="none" stroke-linecap="round" stroke-linejoin="round"><path d="M2 2.5 H14 L9.5 8 V14 L6.5 12.5 V8 Z" stroke="#CED0D6" stroke-width="1.15"/></svg>
<svg style="position:absolute;left:1360.5px;top:1148.0px;" width="19" height="19" viewBox="0 0 16 16" fill="none" stroke-linecap="round" stroke-linejoin="round"><path d="M8 2 L11.2 6.2 H4.8 Z M8 14 L11.2 9.8 H4.8 Z" fill="#A8ABB0"/></svg>
<svg style="position:absolute;left:1401.8px;top:1145.5px;" width="24" height="24" viewBox="0 0 16 16" fill="none" stroke-linecap="round" stroke-linejoin="round"><rect x="3.5" y="2" width="11" height="11" rx="1.5" stroke="#CED0D6" stroke-width="1.15"/><path d="M6 2 V13" stroke="#CED0D6" stroke-width="1.15"/><rect x="3.5" y="2" width="2.5" height="11" fill="#5A5D63"/><circle cx="3" cy="13.3" r="1.6" fill="#26282B" stroke="#CED0D6" stroke-width="1.03"/></svg>
<svg style="position:absolute;left:1588.8px;top:1147.0px;" width="20" height="20" viewBox="0 0 16 16" fill="none" stroke-linecap="round" stroke-linejoin="round"><path d="M2 2.5 H14 L9.5 8 V14 L6.5 12.5 V8 Z" stroke="#CED0D6" stroke-width="1.15"/></svg>
<svg style="position:absolute;left:1640.5px;top:1148.0px;" width="19" height="19" viewBox="0 0 16 16" fill="none" stroke-linecap="round" stroke-linejoin="round"><path d="M8 2 L11.2 6.2 H4.8 Z M8 14 L11.2 9.8 H4.8 Z" fill="#A8ABB0"/></svg>
<svg style="position:absolute;left:1678.0px;top:1145.5px;" width="24" height="24" viewBox="0 0 16 16" fill="none" stroke-linecap="round" stroke-linejoin="round"><rect x="3.5" y="2" width="11" height="11" rx="1.5" stroke="#CED0D6" stroke-width="1.15"/><path d="M6 2 V13" stroke="#CED0D6" stroke-width="1.15"/><rect x="3.5" y="2" width="2.5" height="11" fill="#5A5D63"/><circle cx="3" cy="13.3" r="1.6" fill="#26282B" stroke="#CED0D6" stroke-width="1.03"/></svg>
<svg style="position:absolute;left:1864.8px;top:1147.0px;" width="20" height="20" viewBox="0 0 16 16" fill="none" stroke-linecap="round" stroke-linejoin="round"><path d="M2 2.5 H14 L9.5 8 V14 L6.5 12.5 V8 Z" stroke="#CED0D6" stroke-width="1.15"/></svg>
<svg style="position:absolute;left:1916.5px;top:1148.0px;" width="19" height="19" viewBox="0 0 16 16" fill="none" stroke-linecap="round" stroke-linejoin="round"><path d="M8 2 L11.2 6.2 H4.8 Z M8 14 L11.2 9.8 H4.8 Z" fill="#A8ABB0"/></svg>
<svg style="position:absolute;left:1955.0px;top:1145.5px;" width="24" height="24" viewBox="0 0 16 16" fill="none" stroke-linecap="round" stroke-linejoin="round"><rect x="2" y="2.5" width="12" height="11" rx="1.5" stroke="#CED0D6" stroke-width="1.15"/><path d="M5.5 2.5 V13.5" stroke="#CED0D6" stroke-width="1.15"/></svg>
<svg style="position:absolute;left:2104.5px;top:1147.0px;" width="20" height="20" viewBox="0 0 16 16" fill="none" stroke-linecap="round" stroke-linejoin="round"><path d="M2 2.5 H14 L9.5 8 V14 L6.5 12.5 V8 Z" stroke="#CED0D6" stroke-width="1.15"/></svg>
<svg style="position:absolute;left:2155.5px;top:1148.0px;" width="19" height="19" viewBox="0 0 16 16" fill="none" stroke-linecap="round" stroke-linejoin="round"><path d="M8 2 L11.2 6.2 H4.8 Z M8 14 L11.2 9.8 H4.8 Z" fill="#A8ABB0"/></svg>
<svg style="position:absolute;left:2195.7px;top:1145.5px;" width="24" height="24" viewBox="0 0 16 16" fill="none" stroke-linecap="round" stroke-linejoin="round"><rect x="2" y="2.5" width="12" height="11" rx="1.5" stroke="#CED0D6" stroke-width="1.15"/><path d="M5.5 2.5 V13.5" stroke="#CED0D6" stroke-width="1.15"/></svg>
<svg style="position:absolute;left:1467.5px;top:1432.5px;" width="17" height="17" viewBox="0 0 16 16" fill="none" stroke-linecap="round" stroke-linejoin="round"><path d="M3.5 6 L8 10.5 L12.5 6" stroke="#CED0D6" stroke-width="1.26"/></svg>
<svg style="position:absolute;left:1508.0px;top:1427.0px;" width="24" height="24" viewBox="0 0 16 16" fill="none" stroke-linecap="round" stroke-linejoin="round"><circle cx="8" cy="3" r="1.1" fill="#CED0D6"/><circle cx="8" cy="8" r="1.1" fill="#CED0D6"/><circle cx="8" cy="13" r="1.1" fill="#CED0D6"/></svg>
<svg style="position:absolute;left:138.0px;top:1496.0px;" width="18" height="18" viewBox="0 0 16 16" fill="none" stroke-linecap="round" stroke-linejoin="round"><path d="M6 3.5 L10.5 8 L6 12.5" stroke="#A8ABB0" stroke-width="1.26"/></svg>
<svg style="position:absolute;left:407.0px;top:1496.0px;" width="18" height="18" viewBox="0 0 16 16" fill="none" stroke-linecap="round" stroke-linejoin="round"><path d="M6 3.5 L10.5 8 L6 12.5" stroke="#A8ABB0" stroke-width="1.26"/></svg>
<svg style="position:absolute;left:436.0px;top:1494.0px;" width="22" height="22" viewBox="0 0 16 16" fill="none" stroke-linecap="round" stroke-linejoin="round"><path d="M0.7 1.4 L2 1 C4 1.5 5.8 2.6 7 4.5 C8 6.2 8.6 7.8 9.6 8.6 C10.6 9.4 12.3 10 13.5 10.8 L14.6 12 L12.8 12.1 L15 14.4 M0.7 1.4 C1.4 3 2 4.4 2.5 5.6 C3 6.8 2.6 8.4 2.7 9.6 L3.8 10.6 L4.8 8.8 L7 11.8" stroke="#1FA3E0" stroke-width="0.85" fill="none"/><circle cx="4.3" cy="3.7" r="0.45" fill="#1FA3E0"/></svg>
<svg style="position:absolute;left:2513.5px;top:1494.0px;" width="22" height="22" viewBox="0 0 16 16" fill="none" stroke-linecap="round" stroke-linejoin="round"><rect x="2" y="7.5" width="9" height="7" rx="1.3" stroke="#CED0D6" stroke-width="1.15"/><path d="M8 7.5 V4.5 C8 2.8 9.2 1.5 11 1.5 C12.8 1.5 14 2.8 14 4.5 V6" stroke="#CED0D6" stroke-width="1.15"/><path d="M6.5 10 V12" stroke="#CED0D6" stroke-width="1.15"/></svg>
</body></html>
